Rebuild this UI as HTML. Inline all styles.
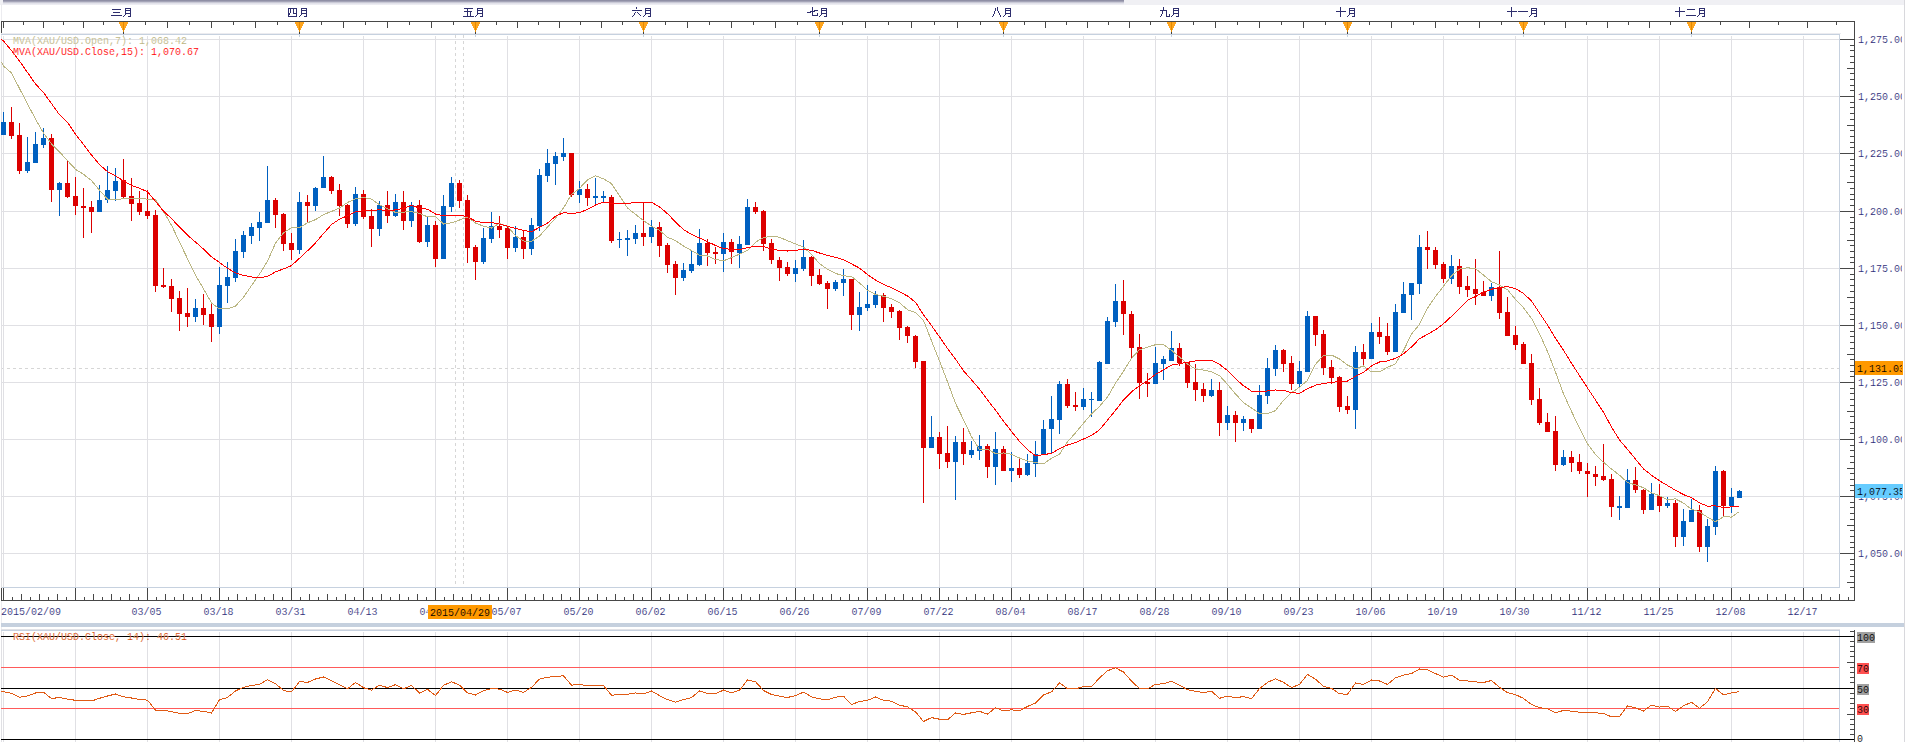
<!DOCTYPE html>
<html><head><meta charset="utf-8"><title>XAU/USD</title>
<style>
html,body{margin:0;padding:0;background:#fff;overflow:hidden}
#c{position:relative;width:1905px;height:742px;overflow:hidden}
svg{display:block}
.m{font-family:"Liberation Mono",monospace}
.s{font-family:"Liberation Serif",serif}
</style></head><body><div id="c">
<svg width="1905" height="742" viewBox="0 0 1905 742" shape-rendering="crispEdges">
<defs><linearGradient id="sh" x1="0" y1="0" x2="0" y2="1"><stop offset="0" stop-color="#8f8fa5"/><stop offset="0.2" stop-color="#8f8fa5"/><stop offset="0.45" stop-color="#c4c4d2"/><stop offset="0.7" stop-color="#e2e2ea"/><stop offset="1" stop-color="#f2f2f6"/></linearGradient></defs>
<rect x="0" y="0" width="1905" height="5" fill="#f0f0f4"/>
<rect x="3" y="0" width="1121" height="5" fill="url(#sh)"/>
<rect x="1" y="4" width="1" height="738" fill="#ececf0"/>
<rect x="1904" y="0" width="1" height="742" fill="#d8d8dc"/>
<rect x="1" y="21" width="1854" height="1" fill="#474747"/>
<rect x="1" y="21" width="1" height="14" fill="#474747"/>
<rect x="1854" y="21" width="1" height="580" fill="#474747"/>
<rect x="3" y="22" width="1" height="6" fill="#474747"/>
<rect x="23" y="22" width="1" height="3" fill="#474747"/>
<rect x="43" y="22" width="1" height="6" fill="#474747"/>
<rect x="63" y="22" width="1" height="3" fill="#474747"/>
<rect x="83" y="22" width="1" height="6" fill="#474747"/>
<rect x="103" y="22" width="1" height="3" fill="#474747"/>
<rect x="145" y="22" width="1" height="3" fill="#474747"/>
<rect x="167" y="22" width="1" height="6" fill="#474747"/>
<rect x="189" y="22" width="1" height="3" fill="#474747"/>
<rect x="211" y="22" width="1" height="6" fill="#474747"/>
<rect x="233" y="22" width="1" height="3" fill="#474747"/>
<rect x="255" y="22" width="1" height="6" fill="#474747"/>
<rect x="277" y="22" width="1" height="3" fill="#474747"/>
<rect x="321" y="22" width="1" height="3" fill="#474747"/>
<rect x="343" y="22" width="1" height="6" fill="#474747"/>
<rect x="365" y="22" width="1" height="3" fill="#474747"/>
<rect x="387" y="22" width="1" height="6" fill="#474747"/>
<rect x="409" y="22" width="1" height="3" fill="#474747"/>
<rect x="431" y="22" width="1" height="6" fill="#474747"/>
<rect x="453" y="22" width="1" height="3" fill="#474747"/>
<rect x="496" y="22" width="1" height="3" fill="#474747"/>
<rect x="517" y="22" width="1" height="6" fill="#474747"/>
<rect x="538" y="22" width="1" height="3" fill="#474747"/>
<rect x="559" y="22" width="1" height="6" fill="#474747"/>
<rect x="580" y="22" width="1" height="3" fill="#474747"/>
<rect x="601" y="22" width="1" height="6" fill="#474747"/>
<rect x="622" y="22" width="1" height="3" fill="#474747"/>
<rect x="665" y="22" width="1" height="3" fill="#474747"/>
<rect x="687" y="22" width="1" height="6" fill="#474747"/>
<rect x="709" y="22" width="1" height="3" fill="#474747"/>
<rect x="731" y="22" width="1" height="6" fill="#474747"/>
<rect x="753" y="22" width="1" height="3" fill="#474747"/>
<rect x="775" y="22" width="1" height="6" fill="#474747"/>
<rect x="797" y="22" width="1" height="3" fill="#474747"/>
<rect x="842" y="22" width="1" height="3" fill="#474747"/>
<rect x="865" y="22" width="1" height="6" fill="#474747"/>
<rect x="888" y="22" width="1" height="3" fill="#474747"/>
<rect x="911" y="22" width="1" height="6" fill="#474747"/>
<rect x="934" y="22" width="1" height="3" fill="#474747"/>
<rect x="957" y="22" width="1" height="6" fill="#474747"/>
<rect x="980" y="22" width="1" height="3" fill="#474747"/>
<rect x="1024" y="22" width="1" height="3" fill="#474747"/>
<rect x="1045" y="22" width="1" height="6" fill="#474747"/>
<rect x="1066" y="22" width="1" height="3" fill="#474747"/>
<rect x="1087" y="22" width="1" height="6" fill="#474747"/>
<rect x="1108" y="22" width="1" height="3" fill="#474747"/>
<rect x="1129" y="22" width="1" height="6" fill="#474747"/>
<rect x="1150" y="22" width="1" height="3" fill="#474747"/>
<rect x="1193" y="22" width="1" height="3" fill="#474747"/>
<rect x="1215" y="22" width="1" height="6" fill="#474747"/>
<rect x="1237" y="22" width="1" height="3" fill="#474747"/>
<rect x="1259" y="22" width="1" height="6" fill="#474747"/>
<rect x="1281" y="22" width="1" height="3" fill="#474747"/>
<rect x="1303" y="22" width="1" height="6" fill="#474747"/>
<rect x="1325" y="22" width="1" height="3" fill="#474747"/>
<rect x="1369" y="22" width="1" height="3" fill="#474747"/>
<rect x="1391" y="22" width="1" height="6" fill="#474747"/>
<rect x="1413" y="22" width="1" height="3" fill="#474747"/>
<rect x="1435" y="22" width="1" height="6" fill="#474747"/>
<rect x="1457" y="22" width="1" height="3" fill="#474747"/>
<rect x="1479" y="22" width="1" height="6" fill="#474747"/>
<rect x="1501" y="22" width="1" height="3" fill="#474747"/>
<rect x="1544" y="22" width="1" height="3" fill="#474747"/>
<rect x="1565" y="22" width="1" height="6" fill="#474747"/>
<rect x="1586" y="22" width="1" height="3" fill="#474747"/>
<rect x="1607" y="22" width="1" height="6" fill="#474747"/>
<rect x="1628" y="22" width="1" height="3" fill="#474747"/>
<rect x="1649" y="22" width="1" height="6" fill="#474747"/>
<rect x="1670" y="22" width="1" height="3" fill="#474747"/>
<rect x="1720" y="22" width="1" height="3" fill="#474747"/>
<rect x="1749" y="22" width="1" height="6" fill="#474747"/>
<rect x="1778" y="22" width="1" height="3" fill="#474747"/>
<rect x="1807" y="22" width="1" height="6" fill="#474747"/>
<rect x="1836" y="22" width="1" height="3" fill="#474747"/>
<rect x="119" y="22" width="9" height="1" fill="#ffa41c"/>
<rect x="119" y="23" width="9" height="1" fill="#ffa41c"/>
<rect x="120" y="24" width="7" height="1" fill="#ffa41c"/>
<rect x="120" y="25" width="7" height="1" fill="#ffa41c"/>
<rect x="121" y="26" width="5" height="1" fill="#ffa41c"/>
<rect x="121" y="27" width="5" height="1" fill="#ffa41c"/>
<rect x="122" y="28" width="3" height="1" fill="#ffa41c"/>
<rect x="122" y="29" width="3" height="1" fill="#ffa41c"/>
<rect x="123" y="30" width="1" height="1" fill="#ffa41c"/>
<rect x="123" y="31" width="1" height="1" fill="#ffa41c"/>
<rect x="123" y="22" width="1" height="10" fill="#e48a00"/>
<rect x="123" y="32" width="1" height="2" fill="#404040"/>
<rect x="295" y="22" width="9" height="1" fill="#ffa41c"/>
<rect x="295" y="23" width="9" height="1" fill="#ffa41c"/>
<rect x="296" y="24" width="7" height="1" fill="#ffa41c"/>
<rect x="296" y="25" width="7" height="1" fill="#ffa41c"/>
<rect x="297" y="26" width="5" height="1" fill="#ffa41c"/>
<rect x="297" y="27" width="5" height="1" fill="#ffa41c"/>
<rect x="298" y="28" width="3" height="1" fill="#ffa41c"/>
<rect x="298" y="29" width="3" height="1" fill="#ffa41c"/>
<rect x="299" y="30" width="1" height="1" fill="#ffa41c"/>
<rect x="299" y="31" width="1" height="1" fill="#ffa41c"/>
<rect x="299" y="22" width="1" height="10" fill="#e48a00"/>
<rect x="299" y="32" width="1" height="2" fill="#404040"/>
<rect x="471" y="22" width="9" height="1" fill="#ffa41c"/>
<rect x="471" y="23" width="9" height="1" fill="#ffa41c"/>
<rect x="472" y="24" width="7" height="1" fill="#ffa41c"/>
<rect x="472" y="25" width="7" height="1" fill="#ffa41c"/>
<rect x="473" y="26" width="5" height="1" fill="#ffa41c"/>
<rect x="473" y="27" width="5" height="1" fill="#ffa41c"/>
<rect x="474" y="28" width="3" height="1" fill="#ffa41c"/>
<rect x="474" y="29" width="3" height="1" fill="#ffa41c"/>
<rect x="475" y="30" width="1" height="1" fill="#ffa41c"/>
<rect x="475" y="31" width="1" height="1" fill="#ffa41c"/>
<rect x="475" y="22" width="1" height="10" fill="#e48a00"/>
<rect x="475" y="32" width="1" height="2" fill="#404040"/>
<rect x="639" y="22" width="9" height="1" fill="#ffa41c"/>
<rect x="639" y="23" width="9" height="1" fill="#ffa41c"/>
<rect x="640" y="24" width="7" height="1" fill="#ffa41c"/>
<rect x="640" y="25" width="7" height="1" fill="#ffa41c"/>
<rect x="641" y="26" width="5" height="1" fill="#ffa41c"/>
<rect x="641" y="27" width="5" height="1" fill="#ffa41c"/>
<rect x="642" y="28" width="3" height="1" fill="#ffa41c"/>
<rect x="642" y="29" width="3" height="1" fill="#ffa41c"/>
<rect x="643" y="30" width="1" height="1" fill="#ffa41c"/>
<rect x="643" y="31" width="1" height="1" fill="#ffa41c"/>
<rect x="643" y="22" width="1" height="10" fill="#e48a00"/>
<rect x="643" y="32" width="1" height="2" fill="#404040"/>
<rect x="815" y="22" width="9" height="1" fill="#ffa41c"/>
<rect x="815" y="23" width="9" height="1" fill="#ffa41c"/>
<rect x="816" y="24" width="7" height="1" fill="#ffa41c"/>
<rect x="816" y="25" width="7" height="1" fill="#ffa41c"/>
<rect x="817" y="26" width="5" height="1" fill="#ffa41c"/>
<rect x="817" y="27" width="5" height="1" fill="#ffa41c"/>
<rect x="818" y="28" width="3" height="1" fill="#ffa41c"/>
<rect x="818" y="29" width="3" height="1" fill="#ffa41c"/>
<rect x="819" y="30" width="1" height="1" fill="#ffa41c"/>
<rect x="819" y="31" width="1" height="1" fill="#ffa41c"/>
<rect x="819" y="22" width="1" height="10" fill="#e48a00"/>
<rect x="819" y="32" width="1" height="2" fill="#404040"/>
<rect x="999" y="22" width="9" height="1" fill="#ffa41c"/>
<rect x="999" y="23" width="9" height="1" fill="#ffa41c"/>
<rect x="1000" y="24" width="7" height="1" fill="#ffa41c"/>
<rect x="1000" y="25" width="7" height="1" fill="#ffa41c"/>
<rect x="1001" y="26" width="5" height="1" fill="#ffa41c"/>
<rect x="1001" y="27" width="5" height="1" fill="#ffa41c"/>
<rect x="1002" y="28" width="3" height="1" fill="#ffa41c"/>
<rect x="1002" y="29" width="3" height="1" fill="#ffa41c"/>
<rect x="1003" y="30" width="1" height="1" fill="#ffa41c"/>
<rect x="1003" y="31" width="1" height="1" fill="#ffa41c"/>
<rect x="1003" y="22" width="1" height="10" fill="#e48a00"/>
<rect x="1003" y="32" width="1" height="2" fill="#404040"/>
<rect x="1167" y="22" width="9" height="1" fill="#ffa41c"/>
<rect x="1167" y="23" width="9" height="1" fill="#ffa41c"/>
<rect x="1168" y="24" width="7" height="1" fill="#ffa41c"/>
<rect x="1168" y="25" width="7" height="1" fill="#ffa41c"/>
<rect x="1169" y="26" width="5" height="1" fill="#ffa41c"/>
<rect x="1169" y="27" width="5" height="1" fill="#ffa41c"/>
<rect x="1170" y="28" width="3" height="1" fill="#ffa41c"/>
<rect x="1170" y="29" width="3" height="1" fill="#ffa41c"/>
<rect x="1171" y="30" width="1" height="1" fill="#ffa41c"/>
<rect x="1171" y="31" width="1" height="1" fill="#ffa41c"/>
<rect x="1171" y="22" width="1" height="10" fill="#e48a00"/>
<rect x="1171" y="32" width="1" height="2" fill="#404040"/>
<rect x="1343" y="22" width="9" height="1" fill="#ffa41c"/>
<rect x="1343" y="23" width="9" height="1" fill="#ffa41c"/>
<rect x="1344" y="24" width="7" height="1" fill="#ffa41c"/>
<rect x="1344" y="25" width="7" height="1" fill="#ffa41c"/>
<rect x="1345" y="26" width="5" height="1" fill="#ffa41c"/>
<rect x="1345" y="27" width="5" height="1" fill="#ffa41c"/>
<rect x="1346" y="28" width="3" height="1" fill="#ffa41c"/>
<rect x="1346" y="29" width="3" height="1" fill="#ffa41c"/>
<rect x="1347" y="30" width="1" height="1" fill="#ffa41c"/>
<rect x="1347" y="31" width="1" height="1" fill="#ffa41c"/>
<rect x="1347" y="22" width="1" height="10" fill="#e48a00"/>
<rect x="1347" y="32" width="1" height="2" fill="#404040"/>
<rect x="1519" y="22" width="9" height="1" fill="#ffa41c"/>
<rect x="1519" y="23" width="9" height="1" fill="#ffa41c"/>
<rect x="1520" y="24" width="7" height="1" fill="#ffa41c"/>
<rect x="1520" y="25" width="7" height="1" fill="#ffa41c"/>
<rect x="1521" y="26" width="5" height="1" fill="#ffa41c"/>
<rect x="1521" y="27" width="5" height="1" fill="#ffa41c"/>
<rect x="1522" y="28" width="3" height="1" fill="#ffa41c"/>
<rect x="1522" y="29" width="3" height="1" fill="#ffa41c"/>
<rect x="1523" y="30" width="1" height="1" fill="#ffa41c"/>
<rect x="1523" y="31" width="1" height="1" fill="#ffa41c"/>
<rect x="1523" y="22" width="1" height="10" fill="#e48a00"/>
<rect x="1523" y="32" width="1" height="2" fill="#404040"/>
<rect x="1687" y="22" width="9" height="1" fill="#ffa41c"/>
<rect x="1687" y="23" width="9" height="1" fill="#ffa41c"/>
<rect x="1688" y="24" width="7" height="1" fill="#ffa41c"/>
<rect x="1688" y="25" width="7" height="1" fill="#ffa41c"/>
<rect x="1689" y="26" width="5" height="1" fill="#ffa41c"/>
<rect x="1689" y="27" width="5" height="1" fill="#ffa41c"/>
<rect x="1690" y="28" width="3" height="1" fill="#ffa41c"/>
<rect x="1690" y="29" width="3" height="1" fill="#ffa41c"/>
<rect x="1691" y="30" width="1" height="1" fill="#ffa41c"/>
<rect x="1691" y="31" width="1" height="1" fill="#ffa41c"/>
<rect x="1691" y="22" width="1" height="10" fill="#e48a00"/>
<rect x="1691" y="32" width="1" height="2" fill="#404040"/>
<rect x="112" y="9" width="1" height="1" fill="#2e2e6e"/>
<rect x="113" y="9" width="1" height="1" fill="#2e2e6e"/>
<rect x="114" y="9" width="1" height="1" fill="#2e2e6e"/>
<rect x="115" y="9" width="1" height="1" fill="#2e2e6e"/>
<rect x="116" y="9" width="1" height="1" fill="#2e2e6e"/>
<rect x="117" y="9" width="1" height="1" fill="#2e2e6e"/>
<rect x="118" y="9" width="1" height="1" fill="#2e2e6e"/>
<rect x="119" y="9" width="1" height="1" fill="#2e2e6e"/>
<rect x="120" y="9" width="1" height="1" fill="#2e2e6e"/>
<rect x="113" y="12" width="1" height="1" fill="#2e2e6e"/>
<rect x="114" y="12" width="1" height="1" fill="#2e2e6e"/>
<rect x="115" y="12" width="1" height="1" fill="#2e2e6e"/>
<rect x="116" y="12" width="1" height="1" fill="#2e2e6e"/>
<rect x="117" y="12" width="1" height="1" fill="#2e2e6e"/>
<rect x="118" y="12" width="1" height="1" fill="#2e2e6e"/>
<rect x="119" y="12" width="1" height="1" fill="#2e2e6e"/>
<rect x="111" y="15" width="1" height="1" fill="#2e2e6e"/>
<rect x="112" y="15" width="1" height="1" fill="#2e2e6e"/>
<rect x="113" y="15" width="1" height="1" fill="#2e2e6e"/>
<rect x="114" y="15" width="1" height="1" fill="#2e2e6e"/>
<rect x="115" y="15" width="1" height="1" fill="#2e2e6e"/>
<rect x="116" y="15" width="1" height="1" fill="#2e2e6e"/>
<rect x="117" y="15" width="1" height="1" fill="#2e2e6e"/>
<rect x="118" y="15" width="1" height="1" fill="#2e2e6e"/>
<rect x="119" y="15" width="1" height="1" fill="#2e2e6e"/>
<rect x="120" y="15" width="1" height="1" fill="#2e2e6e"/>
<rect x="121" y="15" width="1" height="1" fill="#2e2e6e"/>
<rect x="123" y="16" width="1" height="1" fill="#2e2e6e"/>
<rect x="124" y="15" width="1" height="1" fill="#2e2e6e"/>
<rect x="125" y="8" width="1" height="1" fill="#2e2e6e"/>
<rect x="125" y="9" width="1" height="1" fill="#2e2e6e"/>
<rect x="125" y="10" width="1" height="1" fill="#2e2e6e"/>
<rect x="125" y="11" width="1" height="1" fill="#2e2e6e"/>
<rect x="125" y="12" width="1" height="1" fill="#2e2e6e"/>
<rect x="125" y="13" width="1" height="1" fill="#2e2e6e"/>
<rect x="125" y="14" width="1" height="1" fill="#2e2e6e"/>
<rect x="125" y="8" width="1" height="1" fill="#2e2e6e"/>
<rect x="126" y="8" width="1" height="1" fill="#2e2e6e"/>
<rect x="127" y="8" width="1" height="1" fill="#2e2e6e"/>
<rect x="128" y="8" width="1" height="1" fill="#2e2e6e"/>
<rect x="129" y="8" width="1" height="1" fill="#2e2e6e"/>
<rect x="130" y="8" width="1" height="1" fill="#2e2e6e"/>
<rect x="125" y="10" width="1" height="1" fill="#2e2e6e"/>
<rect x="126" y="10" width="1" height="1" fill="#2e2e6e"/>
<rect x="127" y="10" width="1" height="1" fill="#2e2e6e"/>
<rect x="128" y="10" width="1" height="1" fill="#2e2e6e"/>
<rect x="129" y="10" width="1" height="1" fill="#2e2e6e"/>
<rect x="125" y="13" width="1" height="1" fill="#2e2e6e"/>
<rect x="126" y="13" width="1" height="1" fill="#2e2e6e"/>
<rect x="127" y="13" width="1" height="1" fill="#2e2e6e"/>
<rect x="128" y="13" width="1" height="1" fill="#2e2e6e"/>
<rect x="129" y="13" width="1" height="1" fill="#2e2e6e"/>
<rect x="130" y="8" width="1" height="1" fill="#2e2e6e"/>
<rect x="130" y="9" width="1" height="1" fill="#2e2e6e"/>
<rect x="130" y="10" width="1" height="1" fill="#2e2e6e"/>
<rect x="130" y="11" width="1" height="1" fill="#2e2e6e"/>
<rect x="130" y="12" width="1" height="1" fill="#2e2e6e"/>
<rect x="130" y="13" width="1" height="1" fill="#2e2e6e"/>
<rect x="130" y="14" width="1" height="1" fill="#2e2e6e"/>
<rect x="130" y="15" width="1" height="1" fill="#2e2e6e"/>
<rect x="130" y="16" width="1" height="1" fill="#2e2e6e"/>
<rect x="128" y="16" width="1" height="1" fill="#2e2e6e"/>
<rect x="129" y="16" width="1" height="1" fill="#2e2e6e"/>
<rect x="288" y="8" width="1" height="1" fill="#2e2e6e"/>
<rect x="289" y="8" width="1" height="1" fill="#2e2e6e"/>
<rect x="290" y="8" width="1" height="1" fill="#2e2e6e"/>
<rect x="291" y="8" width="1" height="1" fill="#2e2e6e"/>
<rect x="292" y="8" width="1" height="1" fill="#2e2e6e"/>
<rect x="293" y="8" width="1" height="1" fill="#2e2e6e"/>
<rect x="294" y="8" width="1" height="1" fill="#2e2e6e"/>
<rect x="295" y="8" width="1" height="1" fill="#2e2e6e"/>
<rect x="296" y="8" width="1" height="1" fill="#2e2e6e"/>
<rect x="288" y="16" width="1" height="1" fill="#2e2e6e"/>
<rect x="289" y="16" width="1" height="1" fill="#2e2e6e"/>
<rect x="290" y="16" width="1" height="1" fill="#2e2e6e"/>
<rect x="291" y="16" width="1" height="1" fill="#2e2e6e"/>
<rect x="292" y="16" width="1" height="1" fill="#2e2e6e"/>
<rect x="293" y="16" width="1" height="1" fill="#2e2e6e"/>
<rect x="294" y="16" width="1" height="1" fill="#2e2e6e"/>
<rect x="295" y="16" width="1" height="1" fill="#2e2e6e"/>
<rect x="296" y="16" width="1" height="1" fill="#2e2e6e"/>
<rect x="288" y="8" width="1" height="1" fill="#2e2e6e"/>
<rect x="288" y="9" width="1" height="1" fill="#2e2e6e"/>
<rect x="288" y="10" width="1" height="1" fill="#2e2e6e"/>
<rect x="288" y="11" width="1" height="1" fill="#2e2e6e"/>
<rect x="288" y="12" width="1" height="1" fill="#2e2e6e"/>
<rect x="288" y="13" width="1" height="1" fill="#2e2e6e"/>
<rect x="288" y="14" width="1" height="1" fill="#2e2e6e"/>
<rect x="288" y="15" width="1" height="1" fill="#2e2e6e"/>
<rect x="288" y="16" width="1" height="1" fill="#2e2e6e"/>
<rect x="296" y="8" width="1" height="1" fill="#2e2e6e"/>
<rect x="296" y="9" width="1" height="1" fill="#2e2e6e"/>
<rect x="296" y="10" width="1" height="1" fill="#2e2e6e"/>
<rect x="296" y="11" width="1" height="1" fill="#2e2e6e"/>
<rect x="296" y="12" width="1" height="1" fill="#2e2e6e"/>
<rect x="296" y="13" width="1" height="1" fill="#2e2e6e"/>
<rect x="296" y="14" width="1" height="1" fill="#2e2e6e"/>
<rect x="296" y="15" width="1" height="1" fill="#2e2e6e"/>
<rect x="296" y="16" width="1" height="1" fill="#2e2e6e"/>
<rect x="290" y="9" width="1" height="1" fill="#2e2e6e"/>
<rect x="290" y="10" width="1" height="1" fill="#2e2e6e"/>
<rect x="290" y="11" width="1" height="1" fill="#2e2e6e"/>
<rect x="290" y="12" width="1" height="1" fill="#2e2e6e"/>
<rect x="289" y="13" width="1" height="1" fill="#2e2e6e"/>
<rect x="289" y="14" width="1" height="1" fill="#2e2e6e"/>
<rect x="293" y="9" width="1" height="1" fill="#2e2e6e"/>
<rect x="293" y="10" width="1" height="1" fill="#2e2e6e"/>
<rect x="293" y="11" width="1" height="1" fill="#2e2e6e"/>
<rect x="293" y="12" width="1" height="1" fill="#2e2e6e"/>
<rect x="293" y="13" width="1" height="1" fill="#2e2e6e"/>
<rect x="294" y="13" width="1" height="1" fill="#2e2e6e"/>
<rect x="295" y="13" width="1" height="1" fill="#2e2e6e"/>
<rect x="299" y="16" width="1" height="1" fill="#2e2e6e"/>
<rect x="300" y="15" width="1" height="1" fill="#2e2e6e"/>
<rect x="301" y="8" width="1" height="1" fill="#2e2e6e"/>
<rect x="301" y="9" width="1" height="1" fill="#2e2e6e"/>
<rect x="301" y="10" width="1" height="1" fill="#2e2e6e"/>
<rect x="301" y="11" width="1" height="1" fill="#2e2e6e"/>
<rect x="301" y="12" width="1" height="1" fill="#2e2e6e"/>
<rect x="301" y="13" width="1" height="1" fill="#2e2e6e"/>
<rect x="301" y="14" width="1" height="1" fill="#2e2e6e"/>
<rect x="301" y="8" width="1" height="1" fill="#2e2e6e"/>
<rect x="302" y="8" width="1" height="1" fill="#2e2e6e"/>
<rect x="303" y="8" width="1" height="1" fill="#2e2e6e"/>
<rect x="304" y="8" width="1" height="1" fill="#2e2e6e"/>
<rect x="305" y="8" width="1" height="1" fill="#2e2e6e"/>
<rect x="306" y="8" width="1" height="1" fill="#2e2e6e"/>
<rect x="301" y="10" width="1" height="1" fill="#2e2e6e"/>
<rect x="302" y="10" width="1" height="1" fill="#2e2e6e"/>
<rect x="303" y="10" width="1" height="1" fill="#2e2e6e"/>
<rect x="304" y="10" width="1" height="1" fill="#2e2e6e"/>
<rect x="305" y="10" width="1" height="1" fill="#2e2e6e"/>
<rect x="301" y="13" width="1" height="1" fill="#2e2e6e"/>
<rect x="302" y="13" width="1" height="1" fill="#2e2e6e"/>
<rect x="303" y="13" width="1" height="1" fill="#2e2e6e"/>
<rect x="304" y="13" width="1" height="1" fill="#2e2e6e"/>
<rect x="305" y="13" width="1" height="1" fill="#2e2e6e"/>
<rect x="306" y="8" width="1" height="1" fill="#2e2e6e"/>
<rect x="306" y="9" width="1" height="1" fill="#2e2e6e"/>
<rect x="306" y="10" width="1" height="1" fill="#2e2e6e"/>
<rect x="306" y="11" width="1" height="1" fill="#2e2e6e"/>
<rect x="306" y="12" width="1" height="1" fill="#2e2e6e"/>
<rect x="306" y="13" width="1" height="1" fill="#2e2e6e"/>
<rect x="306" y="14" width="1" height="1" fill="#2e2e6e"/>
<rect x="306" y="15" width="1" height="1" fill="#2e2e6e"/>
<rect x="306" y="16" width="1" height="1" fill="#2e2e6e"/>
<rect x="304" y="16" width="1" height="1" fill="#2e2e6e"/>
<rect x="305" y="16" width="1" height="1" fill="#2e2e6e"/>
<rect x="464" y="8" width="1" height="1" fill="#2e2e6e"/>
<rect x="465" y="8" width="1" height="1" fill="#2e2e6e"/>
<rect x="466" y="8" width="1" height="1" fill="#2e2e6e"/>
<rect x="467" y="8" width="1" height="1" fill="#2e2e6e"/>
<rect x="468" y="8" width="1" height="1" fill="#2e2e6e"/>
<rect x="469" y="8" width="1" height="1" fill="#2e2e6e"/>
<rect x="470" y="8" width="1" height="1" fill="#2e2e6e"/>
<rect x="471" y="8" width="1" height="1" fill="#2e2e6e"/>
<rect x="472" y="8" width="1" height="1" fill="#2e2e6e"/>
<rect x="464" y="11" width="1" height="1" fill="#2e2e6e"/>
<rect x="465" y="11" width="1" height="1" fill="#2e2e6e"/>
<rect x="466" y="11" width="1" height="1" fill="#2e2e6e"/>
<rect x="467" y="11" width="1" height="1" fill="#2e2e6e"/>
<rect x="468" y="11" width="1" height="1" fill="#2e2e6e"/>
<rect x="469" y="11" width="1" height="1" fill="#2e2e6e"/>
<rect x="470" y="11" width="1" height="1" fill="#2e2e6e"/>
<rect x="471" y="11" width="1" height="1" fill="#2e2e6e"/>
<rect x="463" y="16" width="1" height="1" fill="#2e2e6e"/>
<rect x="464" y="16" width="1" height="1" fill="#2e2e6e"/>
<rect x="465" y="16" width="1" height="1" fill="#2e2e6e"/>
<rect x="466" y="16" width="1" height="1" fill="#2e2e6e"/>
<rect x="467" y="16" width="1" height="1" fill="#2e2e6e"/>
<rect x="468" y="16" width="1" height="1" fill="#2e2e6e"/>
<rect x="469" y="16" width="1" height="1" fill="#2e2e6e"/>
<rect x="470" y="16" width="1" height="1" fill="#2e2e6e"/>
<rect x="471" y="16" width="1" height="1" fill="#2e2e6e"/>
<rect x="472" y="16" width="1" height="1" fill="#2e2e6e"/>
<rect x="473" y="16" width="1" height="1" fill="#2e2e6e"/>
<rect x="467" y="9" width="1" height="1" fill="#2e2e6e"/>
<rect x="467" y="10" width="1" height="1" fill="#2e2e6e"/>
<rect x="467" y="11" width="1" height="1" fill="#2e2e6e"/>
<rect x="467" y="12" width="1" height="1" fill="#2e2e6e"/>
<rect x="467" y="13" width="1" height="1" fill="#2e2e6e"/>
<rect x="467" y="14" width="1" height="1" fill="#2e2e6e"/>
<rect x="467" y="15" width="1" height="1" fill="#2e2e6e"/>
<rect x="470" y="12" width="1" height="1" fill="#2e2e6e"/>
<rect x="470" y="13" width="1" height="1" fill="#2e2e6e"/>
<rect x="470" y="14" width="1" height="1" fill="#2e2e6e"/>
<rect x="470" y="15" width="1" height="1" fill="#2e2e6e"/>
<rect x="475" y="16" width="1" height="1" fill="#2e2e6e"/>
<rect x="476" y="15" width="1" height="1" fill="#2e2e6e"/>
<rect x="477" y="8" width="1" height="1" fill="#2e2e6e"/>
<rect x="477" y="9" width="1" height="1" fill="#2e2e6e"/>
<rect x="477" y="10" width="1" height="1" fill="#2e2e6e"/>
<rect x="477" y="11" width="1" height="1" fill="#2e2e6e"/>
<rect x="477" y="12" width="1" height="1" fill="#2e2e6e"/>
<rect x="477" y="13" width="1" height="1" fill="#2e2e6e"/>
<rect x="477" y="14" width="1" height="1" fill="#2e2e6e"/>
<rect x="477" y="8" width="1" height="1" fill="#2e2e6e"/>
<rect x="478" y="8" width="1" height="1" fill="#2e2e6e"/>
<rect x="479" y="8" width="1" height="1" fill="#2e2e6e"/>
<rect x="480" y="8" width="1" height="1" fill="#2e2e6e"/>
<rect x="481" y="8" width="1" height="1" fill="#2e2e6e"/>
<rect x="482" y="8" width="1" height="1" fill="#2e2e6e"/>
<rect x="477" y="10" width="1" height="1" fill="#2e2e6e"/>
<rect x="478" y="10" width="1" height="1" fill="#2e2e6e"/>
<rect x="479" y="10" width="1" height="1" fill="#2e2e6e"/>
<rect x="480" y="10" width="1" height="1" fill="#2e2e6e"/>
<rect x="481" y="10" width="1" height="1" fill="#2e2e6e"/>
<rect x="477" y="13" width="1" height="1" fill="#2e2e6e"/>
<rect x="478" y="13" width="1" height="1" fill="#2e2e6e"/>
<rect x="479" y="13" width="1" height="1" fill="#2e2e6e"/>
<rect x="480" y="13" width="1" height="1" fill="#2e2e6e"/>
<rect x="481" y="13" width="1" height="1" fill="#2e2e6e"/>
<rect x="482" y="8" width="1" height="1" fill="#2e2e6e"/>
<rect x="482" y="9" width="1" height="1" fill="#2e2e6e"/>
<rect x="482" y="10" width="1" height="1" fill="#2e2e6e"/>
<rect x="482" y="11" width="1" height="1" fill="#2e2e6e"/>
<rect x="482" y="12" width="1" height="1" fill="#2e2e6e"/>
<rect x="482" y="13" width="1" height="1" fill="#2e2e6e"/>
<rect x="482" y="14" width="1" height="1" fill="#2e2e6e"/>
<rect x="482" y="15" width="1" height="1" fill="#2e2e6e"/>
<rect x="482" y="16" width="1" height="1" fill="#2e2e6e"/>
<rect x="480" y="16" width="1" height="1" fill="#2e2e6e"/>
<rect x="481" y="16" width="1" height="1" fill="#2e2e6e"/>
<rect x="636" y="7" width="1" height="1" fill="#2e2e6e"/>
<rect x="636" y="8" width="1" height="1" fill="#2e2e6e"/>
<rect x="632" y="10" width="1" height="1" fill="#2e2e6e"/>
<rect x="633" y="10" width="1" height="1" fill="#2e2e6e"/>
<rect x="634" y="10" width="1" height="1" fill="#2e2e6e"/>
<rect x="635" y="10" width="1" height="1" fill="#2e2e6e"/>
<rect x="636" y="10" width="1" height="1" fill="#2e2e6e"/>
<rect x="637" y="10" width="1" height="1" fill="#2e2e6e"/>
<rect x="638" y="10" width="1" height="1" fill="#2e2e6e"/>
<rect x="639" y="10" width="1" height="1" fill="#2e2e6e"/>
<rect x="640" y="10" width="1" height="1" fill="#2e2e6e"/>
<rect x="641" y="10" width="1" height="1" fill="#2e2e6e"/>
<rect x="635" y="12" width="1" height="1" fill="#2e2e6e"/>
<rect x="634" y="13" width="1" height="1" fill="#2e2e6e"/>
<rect x="634" y="14" width="1" height="1" fill="#2e2e6e"/>
<rect x="633" y="15" width="1" height="1" fill="#2e2e6e"/>
<rect x="632" y="16" width="1" height="1" fill="#2e2e6e"/>
<rect x="637" y="12" width="1" height="1" fill="#2e2e6e"/>
<rect x="638" y="13" width="1" height="1" fill="#2e2e6e"/>
<rect x="639" y="14" width="1" height="1" fill="#2e2e6e"/>
<rect x="640" y="15" width="1" height="1" fill="#2e2e6e"/>
<rect x="643" y="16" width="1" height="1" fill="#2e2e6e"/>
<rect x="644" y="15" width="1" height="1" fill="#2e2e6e"/>
<rect x="645" y="8" width="1" height="1" fill="#2e2e6e"/>
<rect x="645" y="9" width="1" height="1" fill="#2e2e6e"/>
<rect x="645" y="10" width="1" height="1" fill="#2e2e6e"/>
<rect x="645" y="11" width="1" height="1" fill="#2e2e6e"/>
<rect x="645" y="12" width="1" height="1" fill="#2e2e6e"/>
<rect x="645" y="13" width="1" height="1" fill="#2e2e6e"/>
<rect x="645" y="14" width="1" height="1" fill="#2e2e6e"/>
<rect x="645" y="8" width="1" height="1" fill="#2e2e6e"/>
<rect x="646" y="8" width="1" height="1" fill="#2e2e6e"/>
<rect x="647" y="8" width="1" height="1" fill="#2e2e6e"/>
<rect x="648" y="8" width="1" height="1" fill="#2e2e6e"/>
<rect x="649" y="8" width="1" height="1" fill="#2e2e6e"/>
<rect x="650" y="8" width="1" height="1" fill="#2e2e6e"/>
<rect x="645" y="10" width="1" height="1" fill="#2e2e6e"/>
<rect x="646" y="10" width="1" height="1" fill="#2e2e6e"/>
<rect x="647" y="10" width="1" height="1" fill="#2e2e6e"/>
<rect x="648" y="10" width="1" height="1" fill="#2e2e6e"/>
<rect x="649" y="10" width="1" height="1" fill="#2e2e6e"/>
<rect x="645" y="13" width="1" height="1" fill="#2e2e6e"/>
<rect x="646" y="13" width="1" height="1" fill="#2e2e6e"/>
<rect x="647" y="13" width="1" height="1" fill="#2e2e6e"/>
<rect x="648" y="13" width="1" height="1" fill="#2e2e6e"/>
<rect x="649" y="13" width="1" height="1" fill="#2e2e6e"/>
<rect x="650" y="8" width="1" height="1" fill="#2e2e6e"/>
<rect x="650" y="9" width="1" height="1" fill="#2e2e6e"/>
<rect x="650" y="10" width="1" height="1" fill="#2e2e6e"/>
<rect x="650" y="11" width="1" height="1" fill="#2e2e6e"/>
<rect x="650" y="12" width="1" height="1" fill="#2e2e6e"/>
<rect x="650" y="13" width="1" height="1" fill="#2e2e6e"/>
<rect x="650" y="14" width="1" height="1" fill="#2e2e6e"/>
<rect x="650" y="15" width="1" height="1" fill="#2e2e6e"/>
<rect x="650" y="16" width="1" height="1" fill="#2e2e6e"/>
<rect x="648" y="16" width="1" height="1" fill="#2e2e6e"/>
<rect x="649" y="16" width="1" height="1" fill="#2e2e6e"/>
<rect x="807" y="12" width="1" height="1" fill="#2e2e6e"/>
<rect x="808" y="12" width="1" height="1" fill="#2e2e6e"/>
<rect x="809" y="12" width="1" height="1" fill="#2e2e6e"/>
<rect x="810" y="12" width="1" height="1" fill="#2e2e6e"/>
<rect x="810" y="11" width="1" height="1" fill="#2e2e6e"/>
<rect x="811" y="11" width="1" height="1" fill="#2e2e6e"/>
<rect x="812" y="11" width="1" height="1" fill="#2e2e6e"/>
<rect x="813" y="11" width="1" height="1" fill="#2e2e6e"/>
<rect x="814" y="11" width="1" height="1" fill="#2e2e6e"/>
<rect x="814" y="10" width="1" height="1" fill="#2e2e6e"/>
<rect x="815" y="10" width="1" height="1" fill="#2e2e6e"/>
<rect x="816" y="10" width="1" height="1" fill="#2e2e6e"/>
<rect x="817" y="10" width="1" height="1" fill="#2e2e6e"/>
<rect x="812" y="7" width="1" height="1" fill="#2e2e6e"/>
<rect x="812" y="8" width="1" height="1" fill="#2e2e6e"/>
<rect x="812" y="9" width="1" height="1" fill="#2e2e6e"/>
<rect x="812" y="10" width="1" height="1" fill="#2e2e6e"/>
<rect x="812" y="11" width="1" height="1" fill="#2e2e6e"/>
<rect x="812" y="12" width="1" height="1" fill="#2e2e6e"/>
<rect x="812" y="13" width="1" height="1" fill="#2e2e6e"/>
<rect x="812" y="14" width="1" height="1" fill="#2e2e6e"/>
<rect x="812" y="15" width="1" height="1" fill="#2e2e6e"/>
<rect x="812" y="15" width="1" height="1" fill="#2e2e6e"/>
<rect x="813" y="15" width="1" height="1" fill="#2e2e6e"/>
<rect x="814" y="15" width="1" height="1" fill="#2e2e6e"/>
<rect x="815" y="15" width="1" height="1" fill="#2e2e6e"/>
<rect x="816" y="15" width="1" height="1" fill="#2e2e6e"/>
<rect x="817" y="15" width="1" height="1" fill="#2e2e6e"/>
<rect x="817" y="13" width="1" height="1" fill="#2e2e6e"/>
<rect x="817" y="14" width="1" height="1" fill="#2e2e6e"/>
<rect x="819" y="16" width="1" height="1" fill="#2e2e6e"/>
<rect x="820" y="15" width="1" height="1" fill="#2e2e6e"/>
<rect x="821" y="8" width="1" height="1" fill="#2e2e6e"/>
<rect x="821" y="9" width="1" height="1" fill="#2e2e6e"/>
<rect x="821" y="10" width="1" height="1" fill="#2e2e6e"/>
<rect x="821" y="11" width="1" height="1" fill="#2e2e6e"/>
<rect x="821" y="12" width="1" height="1" fill="#2e2e6e"/>
<rect x="821" y="13" width="1" height="1" fill="#2e2e6e"/>
<rect x="821" y="14" width="1" height="1" fill="#2e2e6e"/>
<rect x="821" y="8" width="1" height="1" fill="#2e2e6e"/>
<rect x="822" y="8" width="1" height="1" fill="#2e2e6e"/>
<rect x="823" y="8" width="1" height="1" fill="#2e2e6e"/>
<rect x="824" y="8" width="1" height="1" fill="#2e2e6e"/>
<rect x="825" y="8" width="1" height="1" fill="#2e2e6e"/>
<rect x="826" y="8" width="1" height="1" fill="#2e2e6e"/>
<rect x="821" y="10" width="1" height="1" fill="#2e2e6e"/>
<rect x="822" y="10" width="1" height="1" fill="#2e2e6e"/>
<rect x="823" y="10" width="1" height="1" fill="#2e2e6e"/>
<rect x="824" y="10" width="1" height="1" fill="#2e2e6e"/>
<rect x="825" y="10" width="1" height="1" fill="#2e2e6e"/>
<rect x="821" y="13" width="1" height="1" fill="#2e2e6e"/>
<rect x="822" y="13" width="1" height="1" fill="#2e2e6e"/>
<rect x="823" y="13" width="1" height="1" fill="#2e2e6e"/>
<rect x="824" y="13" width="1" height="1" fill="#2e2e6e"/>
<rect x="825" y="13" width="1" height="1" fill="#2e2e6e"/>
<rect x="826" y="8" width="1" height="1" fill="#2e2e6e"/>
<rect x="826" y="9" width="1" height="1" fill="#2e2e6e"/>
<rect x="826" y="10" width="1" height="1" fill="#2e2e6e"/>
<rect x="826" y="11" width="1" height="1" fill="#2e2e6e"/>
<rect x="826" y="12" width="1" height="1" fill="#2e2e6e"/>
<rect x="826" y="13" width="1" height="1" fill="#2e2e6e"/>
<rect x="826" y="14" width="1" height="1" fill="#2e2e6e"/>
<rect x="826" y="15" width="1" height="1" fill="#2e2e6e"/>
<rect x="826" y="16" width="1" height="1" fill="#2e2e6e"/>
<rect x="824" y="16" width="1" height="1" fill="#2e2e6e"/>
<rect x="825" y="16" width="1" height="1" fill="#2e2e6e"/>
<rect x="995" y="8" width="1" height="1" fill="#2e2e6e"/>
<rect x="995" y="9" width="1" height="1" fill="#2e2e6e"/>
<rect x="995" y="10" width="1" height="1" fill="#2e2e6e"/>
<rect x="994" y="11" width="1" height="1" fill="#2e2e6e"/>
<rect x="994" y="12" width="1" height="1" fill="#2e2e6e"/>
<rect x="994" y="13" width="1" height="1" fill="#2e2e6e"/>
<rect x="993" y="14" width="1" height="1" fill="#2e2e6e"/>
<rect x="993" y="15" width="1" height="1" fill="#2e2e6e"/>
<rect x="992" y="16" width="1" height="1" fill="#2e2e6e"/>
<rect x="997" y="7" width="1" height="1" fill="#2e2e6e"/>
<rect x="997" y="8" width="1" height="1" fill="#2e2e6e"/>
<rect x="997" y="9" width="1" height="1" fill="#2e2e6e"/>
<rect x="997" y="10" width="1" height="1" fill="#2e2e6e"/>
<rect x="998" y="11" width="1" height="1" fill="#2e2e6e"/>
<rect x="998" y="12" width="1" height="1" fill="#2e2e6e"/>
<rect x="999" y="13" width="1" height="1" fill="#2e2e6e"/>
<rect x="999" y="14" width="1" height="1" fill="#2e2e6e"/>
<rect x="1000" y="15" width="1" height="1" fill="#2e2e6e"/>
<rect x="1000" y="16" width="1" height="1" fill="#2e2e6e"/>
<rect x="1003" y="16" width="1" height="1" fill="#2e2e6e"/>
<rect x="1004" y="15" width="1" height="1" fill="#2e2e6e"/>
<rect x="1005" y="8" width="1" height="1" fill="#2e2e6e"/>
<rect x="1005" y="9" width="1" height="1" fill="#2e2e6e"/>
<rect x="1005" y="10" width="1" height="1" fill="#2e2e6e"/>
<rect x="1005" y="11" width="1" height="1" fill="#2e2e6e"/>
<rect x="1005" y="12" width="1" height="1" fill="#2e2e6e"/>
<rect x="1005" y="13" width="1" height="1" fill="#2e2e6e"/>
<rect x="1005" y="14" width="1" height="1" fill="#2e2e6e"/>
<rect x="1005" y="8" width="1" height="1" fill="#2e2e6e"/>
<rect x="1006" y="8" width="1" height="1" fill="#2e2e6e"/>
<rect x="1007" y="8" width="1" height="1" fill="#2e2e6e"/>
<rect x="1008" y="8" width="1" height="1" fill="#2e2e6e"/>
<rect x="1009" y="8" width="1" height="1" fill="#2e2e6e"/>
<rect x="1010" y="8" width="1" height="1" fill="#2e2e6e"/>
<rect x="1005" y="10" width="1" height="1" fill="#2e2e6e"/>
<rect x="1006" y="10" width="1" height="1" fill="#2e2e6e"/>
<rect x="1007" y="10" width="1" height="1" fill="#2e2e6e"/>
<rect x="1008" y="10" width="1" height="1" fill="#2e2e6e"/>
<rect x="1009" y="10" width="1" height="1" fill="#2e2e6e"/>
<rect x="1005" y="13" width="1" height="1" fill="#2e2e6e"/>
<rect x="1006" y="13" width="1" height="1" fill="#2e2e6e"/>
<rect x="1007" y="13" width="1" height="1" fill="#2e2e6e"/>
<rect x="1008" y="13" width="1" height="1" fill="#2e2e6e"/>
<rect x="1009" y="13" width="1" height="1" fill="#2e2e6e"/>
<rect x="1010" y="8" width="1" height="1" fill="#2e2e6e"/>
<rect x="1010" y="9" width="1" height="1" fill="#2e2e6e"/>
<rect x="1010" y="10" width="1" height="1" fill="#2e2e6e"/>
<rect x="1010" y="11" width="1" height="1" fill="#2e2e6e"/>
<rect x="1010" y="12" width="1" height="1" fill="#2e2e6e"/>
<rect x="1010" y="13" width="1" height="1" fill="#2e2e6e"/>
<rect x="1010" y="14" width="1" height="1" fill="#2e2e6e"/>
<rect x="1010" y="15" width="1" height="1" fill="#2e2e6e"/>
<rect x="1010" y="16" width="1" height="1" fill="#2e2e6e"/>
<rect x="1008" y="16" width="1" height="1" fill="#2e2e6e"/>
<rect x="1009" y="16" width="1" height="1" fill="#2e2e6e"/>
<rect x="1160" y="10" width="1" height="1" fill="#2e2e6e"/>
<rect x="1161" y="10" width="1" height="1" fill="#2e2e6e"/>
<rect x="1162" y="10" width="1" height="1" fill="#2e2e6e"/>
<rect x="1163" y="10" width="1" height="1" fill="#2e2e6e"/>
<rect x="1164" y="10" width="1" height="1" fill="#2e2e6e"/>
<rect x="1165" y="10" width="1" height="1" fill="#2e2e6e"/>
<rect x="1166" y="10" width="1" height="1" fill="#2e2e6e"/>
<rect x="1163" y="7" width="1" height="1" fill="#2e2e6e"/>
<rect x="1163" y="8" width="1" height="1" fill="#2e2e6e"/>
<rect x="1163" y="9" width="1" height="1" fill="#2e2e6e"/>
<rect x="1162" y="11" width="1" height="1" fill="#2e2e6e"/>
<rect x="1162" y="12" width="1" height="1" fill="#2e2e6e"/>
<rect x="1162" y="13" width="1" height="1" fill="#2e2e6e"/>
<rect x="1161" y="14" width="1" height="1" fill="#2e2e6e"/>
<rect x="1161" y="15" width="1" height="1" fill="#2e2e6e"/>
<rect x="1160" y="16" width="1" height="1" fill="#2e2e6e"/>
<rect x="1166" y="10" width="1" height="1" fill="#2e2e6e"/>
<rect x="1166" y="11" width="1" height="1" fill="#2e2e6e"/>
<rect x="1166" y="12" width="1" height="1" fill="#2e2e6e"/>
<rect x="1166" y="13" width="1" height="1" fill="#2e2e6e"/>
<rect x="1166" y="14" width="1" height="1" fill="#2e2e6e"/>
<rect x="1166" y="15" width="1" height="1" fill="#2e2e6e"/>
<rect x="1166" y="16" width="1" height="1" fill="#2e2e6e"/>
<rect x="1167" y="16" width="1" height="1" fill="#2e2e6e"/>
<rect x="1168" y="16" width="1" height="1" fill="#2e2e6e"/>
<rect x="1169" y="16" width="1" height="1" fill="#2e2e6e"/>
<rect x="1169" y="14" width="1" height="1" fill="#2e2e6e"/>
<rect x="1169" y="15" width="1" height="1" fill="#2e2e6e"/>
<rect x="1171" y="16" width="1" height="1" fill="#2e2e6e"/>
<rect x="1172" y="15" width="1" height="1" fill="#2e2e6e"/>
<rect x="1173" y="8" width="1" height="1" fill="#2e2e6e"/>
<rect x="1173" y="9" width="1" height="1" fill="#2e2e6e"/>
<rect x="1173" y="10" width="1" height="1" fill="#2e2e6e"/>
<rect x="1173" y="11" width="1" height="1" fill="#2e2e6e"/>
<rect x="1173" y="12" width="1" height="1" fill="#2e2e6e"/>
<rect x="1173" y="13" width="1" height="1" fill="#2e2e6e"/>
<rect x="1173" y="14" width="1" height="1" fill="#2e2e6e"/>
<rect x="1173" y="8" width="1" height="1" fill="#2e2e6e"/>
<rect x="1174" y="8" width="1" height="1" fill="#2e2e6e"/>
<rect x="1175" y="8" width="1" height="1" fill="#2e2e6e"/>
<rect x="1176" y="8" width="1" height="1" fill="#2e2e6e"/>
<rect x="1177" y="8" width="1" height="1" fill="#2e2e6e"/>
<rect x="1178" y="8" width="1" height="1" fill="#2e2e6e"/>
<rect x="1173" y="10" width="1" height="1" fill="#2e2e6e"/>
<rect x="1174" y="10" width="1" height="1" fill="#2e2e6e"/>
<rect x="1175" y="10" width="1" height="1" fill="#2e2e6e"/>
<rect x="1176" y="10" width="1" height="1" fill="#2e2e6e"/>
<rect x="1177" y="10" width="1" height="1" fill="#2e2e6e"/>
<rect x="1173" y="13" width="1" height="1" fill="#2e2e6e"/>
<rect x="1174" y="13" width="1" height="1" fill="#2e2e6e"/>
<rect x="1175" y="13" width="1" height="1" fill="#2e2e6e"/>
<rect x="1176" y="13" width="1" height="1" fill="#2e2e6e"/>
<rect x="1177" y="13" width="1" height="1" fill="#2e2e6e"/>
<rect x="1178" y="8" width="1" height="1" fill="#2e2e6e"/>
<rect x="1178" y="9" width="1" height="1" fill="#2e2e6e"/>
<rect x="1178" y="10" width="1" height="1" fill="#2e2e6e"/>
<rect x="1178" y="11" width="1" height="1" fill="#2e2e6e"/>
<rect x="1178" y="12" width="1" height="1" fill="#2e2e6e"/>
<rect x="1178" y="13" width="1" height="1" fill="#2e2e6e"/>
<rect x="1178" y="14" width="1" height="1" fill="#2e2e6e"/>
<rect x="1178" y="15" width="1" height="1" fill="#2e2e6e"/>
<rect x="1178" y="16" width="1" height="1" fill="#2e2e6e"/>
<rect x="1176" y="16" width="1" height="1" fill="#2e2e6e"/>
<rect x="1177" y="16" width="1" height="1" fill="#2e2e6e"/>
<rect x="1336" y="11" width="1" height="1" fill="#2e2e6e"/>
<rect x="1337" y="11" width="1" height="1" fill="#2e2e6e"/>
<rect x="1338" y="11" width="1" height="1" fill="#2e2e6e"/>
<rect x="1339" y="11" width="1" height="1" fill="#2e2e6e"/>
<rect x="1340" y="11" width="1" height="1" fill="#2e2e6e"/>
<rect x="1341" y="11" width="1" height="1" fill="#2e2e6e"/>
<rect x="1342" y="11" width="1" height="1" fill="#2e2e6e"/>
<rect x="1343" y="11" width="1" height="1" fill="#2e2e6e"/>
<rect x="1344" y="11" width="1" height="1" fill="#2e2e6e"/>
<rect x="1345" y="11" width="1" height="1" fill="#2e2e6e"/>
<rect x="1340" y="7" width="1" height="1" fill="#2e2e6e"/>
<rect x="1340" y="8" width="1" height="1" fill="#2e2e6e"/>
<rect x="1340" y="9" width="1" height="1" fill="#2e2e6e"/>
<rect x="1340" y="10" width="1" height="1" fill="#2e2e6e"/>
<rect x="1340" y="11" width="1" height="1" fill="#2e2e6e"/>
<rect x="1340" y="12" width="1" height="1" fill="#2e2e6e"/>
<rect x="1340" y="13" width="1" height="1" fill="#2e2e6e"/>
<rect x="1340" y="14" width="1" height="1" fill="#2e2e6e"/>
<rect x="1340" y="15" width="1" height="1" fill="#2e2e6e"/>
<rect x="1340" y="16" width="1" height="1" fill="#2e2e6e"/>
<rect x="1347" y="16" width="1" height="1" fill="#2e2e6e"/>
<rect x="1348" y="15" width="1" height="1" fill="#2e2e6e"/>
<rect x="1349" y="8" width="1" height="1" fill="#2e2e6e"/>
<rect x="1349" y="9" width="1" height="1" fill="#2e2e6e"/>
<rect x="1349" y="10" width="1" height="1" fill="#2e2e6e"/>
<rect x="1349" y="11" width="1" height="1" fill="#2e2e6e"/>
<rect x="1349" y="12" width="1" height="1" fill="#2e2e6e"/>
<rect x="1349" y="13" width="1" height="1" fill="#2e2e6e"/>
<rect x="1349" y="14" width="1" height="1" fill="#2e2e6e"/>
<rect x="1349" y="8" width="1" height="1" fill="#2e2e6e"/>
<rect x="1350" y="8" width="1" height="1" fill="#2e2e6e"/>
<rect x="1351" y="8" width="1" height="1" fill="#2e2e6e"/>
<rect x="1352" y="8" width="1" height="1" fill="#2e2e6e"/>
<rect x="1353" y="8" width="1" height="1" fill="#2e2e6e"/>
<rect x="1354" y="8" width="1" height="1" fill="#2e2e6e"/>
<rect x="1349" y="10" width="1" height="1" fill="#2e2e6e"/>
<rect x="1350" y="10" width="1" height="1" fill="#2e2e6e"/>
<rect x="1351" y="10" width="1" height="1" fill="#2e2e6e"/>
<rect x="1352" y="10" width="1" height="1" fill="#2e2e6e"/>
<rect x="1353" y="10" width="1" height="1" fill="#2e2e6e"/>
<rect x="1349" y="13" width="1" height="1" fill="#2e2e6e"/>
<rect x="1350" y="13" width="1" height="1" fill="#2e2e6e"/>
<rect x="1351" y="13" width="1" height="1" fill="#2e2e6e"/>
<rect x="1352" y="13" width="1" height="1" fill="#2e2e6e"/>
<rect x="1353" y="13" width="1" height="1" fill="#2e2e6e"/>
<rect x="1354" y="8" width="1" height="1" fill="#2e2e6e"/>
<rect x="1354" y="9" width="1" height="1" fill="#2e2e6e"/>
<rect x="1354" y="10" width="1" height="1" fill="#2e2e6e"/>
<rect x="1354" y="11" width="1" height="1" fill="#2e2e6e"/>
<rect x="1354" y="12" width="1" height="1" fill="#2e2e6e"/>
<rect x="1354" y="13" width="1" height="1" fill="#2e2e6e"/>
<rect x="1354" y="14" width="1" height="1" fill="#2e2e6e"/>
<rect x="1354" y="15" width="1" height="1" fill="#2e2e6e"/>
<rect x="1354" y="16" width="1" height="1" fill="#2e2e6e"/>
<rect x="1352" y="16" width="1" height="1" fill="#2e2e6e"/>
<rect x="1353" y="16" width="1" height="1" fill="#2e2e6e"/>
<rect x="1507" y="11" width="1" height="1" fill="#2e2e6e"/>
<rect x="1508" y="11" width="1" height="1" fill="#2e2e6e"/>
<rect x="1509" y="11" width="1" height="1" fill="#2e2e6e"/>
<rect x="1510" y="11" width="1" height="1" fill="#2e2e6e"/>
<rect x="1511" y="11" width="1" height="1" fill="#2e2e6e"/>
<rect x="1512" y="11" width="1" height="1" fill="#2e2e6e"/>
<rect x="1513" y="11" width="1" height="1" fill="#2e2e6e"/>
<rect x="1514" y="11" width="1" height="1" fill="#2e2e6e"/>
<rect x="1515" y="11" width="1" height="1" fill="#2e2e6e"/>
<rect x="1516" y="11" width="1" height="1" fill="#2e2e6e"/>
<rect x="1511" y="7" width="1" height="1" fill="#2e2e6e"/>
<rect x="1511" y="8" width="1" height="1" fill="#2e2e6e"/>
<rect x="1511" y="9" width="1" height="1" fill="#2e2e6e"/>
<rect x="1511" y="10" width="1" height="1" fill="#2e2e6e"/>
<rect x="1511" y="11" width="1" height="1" fill="#2e2e6e"/>
<rect x="1511" y="12" width="1" height="1" fill="#2e2e6e"/>
<rect x="1511" y="13" width="1" height="1" fill="#2e2e6e"/>
<rect x="1511" y="14" width="1" height="1" fill="#2e2e6e"/>
<rect x="1511" y="15" width="1" height="1" fill="#2e2e6e"/>
<rect x="1511" y="16" width="1" height="1" fill="#2e2e6e"/>
<rect x="1518" y="11" width="1" height="1" fill="#2e2e6e"/>
<rect x="1519" y="11" width="1" height="1" fill="#2e2e6e"/>
<rect x="1520" y="11" width="1" height="1" fill="#2e2e6e"/>
<rect x="1521" y="11" width="1" height="1" fill="#2e2e6e"/>
<rect x="1522" y="11" width="1" height="1" fill="#2e2e6e"/>
<rect x="1523" y="11" width="1" height="1" fill="#2e2e6e"/>
<rect x="1524" y="11" width="1" height="1" fill="#2e2e6e"/>
<rect x="1525" y="11" width="1" height="1" fill="#2e2e6e"/>
<rect x="1526" y="11" width="1" height="1" fill="#2e2e6e"/>
<rect x="1527" y="11" width="1" height="1" fill="#2e2e6e"/>
<rect x="1529" y="16" width="1" height="1" fill="#2e2e6e"/>
<rect x="1530" y="15" width="1" height="1" fill="#2e2e6e"/>
<rect x="1531" y="8" width="1" height="1" fill="#2e2e6e"/>
<rect x="1531" y="9" width="1" height="1" fill="#2e2e6e"/>
<rect x="1531" y="10" width="1" height="1" fill="#2e2e6e"/>
<rect x="1531" y="11" width="1" height="1" fill="#2e2e6e"/>
<rect x="1531" y="12" width="1" height="1" fill="#2e2e6e"/>
<rect x="1531" y="13" width="1" height="1" fill="#2e2e6e"/>
<rect x="1531" y="14" width="1" height="1" fill="#2e2e6e"/>
<rect x="1531" y="8" width="1" height="1" fill="#2e2e6e"/>
<rect x="1532" y="8" width="1" height="1" fill="#2e2e6e"/>
<rect x="1533" y="8" width="1" height="1" fill="#2e2e6e"/>
<rect x="1534" y="8" width="1" height="1" fill="#2e2e6e"/>
<rect x="1535" y="8" width="1" height="1" fill="#2e2e6e"/>
<rect x="1536" y="8" width="1" height="1" fill="#2e2e6e"/>
<rect x="1531" y="10" width="1" height="1" fill="#2e2e6e"/>
<rect x="1532" y="10" width="1" height="1" fill="#2e2e6e"/>
<rect x="1533" y="10" width="1" height="1" fill="#2e2e6e"/>
<rect x="1534" y="10" width="1" height="1" fill="#2e2e6e"/>
<rect x="1535" y="10" width="1" height="1" fill="#2e2e6e"/>
<rect x="1531" y="13" width="1" height="1" fill="#2e2e6e"/>
<rect x="1532" y="13" width="1" height="1" fill="#2e2e6e"/>
<rect x="1533" y="13" width="1" height="1" fill="#2e2e6e"/>
<rect x="1534" y="13" width="1" height="1" fill="#2e2e6e"/>
<rect x="1535" y="13" width="1" height="1" fill="#2e2e6e"/>
<rect x="1536" y="8" width="1" height="1" fill="#2e2e6e"/>
<rect x="1536" y="9" width="1" height="1" fill="#2e2e6e"/>
<rect x="1536" y="10" width="1" height="1" fill="#2e2e6e"/>
<rect x="1536" y="11" width="1" height="1" fill="#2e2e6e"/>
<rect x="1536" y="12" width="1" height="1" fill="#2e2e6e"/>
<rect x="1536" y="13" width="1" height="1" fill="#2e2e6e"/>
<rect x="1536" y="14" width="1" height="1" fill="#2e2e6e"/>
<rect x="1536" y="15" width="1" height="1" fill="#2e2e6e"/>
<rect x="1536" y="16" width="1" height="1" fill="#2e2e6e"/>
<rect x="1534" y="16" width="1" height="1" fill="#2e2e6e"/>
<rect x="1535" y="16" width="1" height="1" fill="#2e2e6e"/>
<rect x="1675" y="11" width="1" height="1" fill="#2e2e6e"/>
<rect x="1676" y="11" width="1" height="1" fill="#2e2e6e"/>
<rect x="1677" y="11" width="1" height="1" fill="#2e2e6e"/>
<rect x="1678" y="11" width="1" height="1" fill="#2e2e6e"/>
<rect x="1679" y="11" width="1" height="1" fill="#2e2e6e"/>
<rect x="1680" y="11" width="1" height="1" fill="#2e2e6e"/>
<rect x="1681" y="11" width="1" height="1" fill="#2e2e6e"/>
<rect x="1682" y="11" width="1" height="1" fill="#2e2e6e"/>
<rect x="1683" y="11" width="1" height="1" fill="#2e2e6e"/>
<rect x="1684" y="11" width="1" height="1" fill="#2e2e6e"/>
<rect x="1679" y="7" width="1" height="1" fill="#2e2e6e"/>
<rect x="1679" y="8" width="1" height="1" fill="#2e2e6e"/>
<rect x="1679" y="9" width="1" height="1" fill="#2e2e6e"/>
<rect x="1679" y="10" width="1" height="1" fill="#2e2e6e"/>
<rect x="1679" y="11" width="1" height="1" fill="#2e2e6e"/>
<rect x="1679" y="12" width="1" height="1" fill="#2e2e6e"/>
<rect x="1679" y="13" width="1" height="1" fill="#2e2e6e"/>
<rect x="1679" y="14" width="1" height="1" fill="#2e2e6e"/>
<rect x="1679" y="15" width="1" height="1" fill="#2e2e6e"/>
<rect x="1679" y="16" width="1" height="1" fill="#2e2e6e"/>
<rect x="1687" y="9" width="1" height="1" fill="#2e2e6e"/>
<rect x="1688" y="9" width="1" height="1" fill="#2e2e6e"/>
<rect x="1689" y="9" width="1" height="1" fill="#2e2e6e"/>
<rect x="1690" y="9" width="1" height="1" fill="#2e2e6e"/>
<rect x="1691" y="9" width="1" height="1" fill="#2e2e6e"/>
<rect x="1692" y="9" width="1" height="1" fill="#2e2e6e"/>
<rect x="1693" y="9" width="1" height="1" fill="#2e2e6e"/>
<rect x="1694" y="9" width="1" height="1" fill="#2e2e6e"/>
<rect x="1686" y="15" width="1" height="1" fill="#2e2e6e"/>
<rect x="1687" y="15" width="1" height="1" fill="#2e2e6e"/>
<rect x="1688" y="15" width="1" height="1" fill="#2e2e6e"/>
<rect x="1689" y="15" width="1" height="1" fill="#2e2e6e"/>
<rect x="1690" y="15" width="1" height="1" fill="#2e2e6e"/>
<rect x="1691" y="15" width="1" height="1" fill="#2e2e6e"/>
<rect x="1692" y="15" width="1" height="1" fill="#2e2e6e"/>
<rect x="1693" y="15" width="1" height="1" fill="#2e2e6e"/>
<rect x="1694" y="15" width="1" height="1" fill="#2e2e6e"/>
<rect x="1695" y="15" width="1" height="1" fill="#2e2e6e"/>
<rect x="1697" y="16" width="1" height="1" fill="#2e2e6e"/>
<rect x="1698" y="15" width="1" height="1" fill="#2e2e6e"/>
<rect x="1699" y="8" width="1" height="1" fill="#2e2e6e"/>
<rect x="1699" y="9" width="1" height="1" fill="#2e2e6e"/>
<rect x="1699" y="10" width="1" height="1" fill="#2e2e6e"/>
<rect x="1699" y="11" width="1" height="1" fill="#2e2e6e"/>
<rect x="1699" y="12" width="1" height="1" fill="#2e2e6e"/>
<rect x="1699" y="13" width="1" height="1" fill="#2e2e6e"/>
<rect x="1699" y="14" width="1" height="1" fill="#2e2e6e"/>
<rect x="1699" y="8" width="1" height="1" fill="#2e2e6e"/>
<rect x="1700" y="8" width="1" height="1" fill="#2e2e6e"/>
<rect x="1701" y="8" width="1" height="1" fill="#2e2e6e"/>
<rect x="1702" y="8" width="1" height="1" fill="#2e2e6e"/>
<rect x="1703" y="8" width="1" height="1" fill="#2e2e6e"/>
<rect x="1704" y="8" width="1" height="1" fill="#2e2e6e"/>
<rect x="1699" y="10" width="1" height="1" fill="#2e2e6e"/>
<rect x="1700" y="10" width="1" height="1" fill="#2e2e6e"/>
<rect x="1701" y="10" width="1" height="1" fill="#2e2e6e"/>
<rect x="1702" y="10" width="1" height="1" fill="#2e2e6e"/>
<rect x="1703" y="10" width="1" height="1" fill="#2e2e6e"/>
<rect x="1699" y="13" width="1" height="1" fill="#2e2e6e"/>
<rect x="1700" y="13" width="1" height="1" fill="#2e2e6e"/>
<rect x="1701" y="13" width="1" height="1" fill="#2e2e6e"/>
<rect x="1702" y="13" width="1" height="1" fill="#2e2e6e"/>
<rect x="1703" y="13" width="1" height="1" fill="#2e2e6e"/>
<rect x="1704" y="8" width="1" height="1" fill="#2e2e6e"/>
<rect x="1704" y="9" width="1" height="1" fill="#2e2e6e"/>
<rect x="1704" y="10" width="1" height="1" fill="#2e2e6e"/>
<rect x="1704" y="11" width="1" height="1" fill="#2e2e6e"/>
<rect x="1704" y="12" width="1" height="1" fill="#2e2e6e"/>
<rect x="1704" y="13" width="1" height="1" fill="#2e2e6e"/>
<rect x="1704" y="14" width="1" height="1" fill="#2e2e6e"/>
<rect x="1704" y="15" width="1" height="1" fill="#2e2e6e"/>
<rect x="1704" y="16" width="1" height="1" fill="#2e2e6e"/>
<rect x="1702" y="16" width="1" height="1" fill="#2e2e6e"/>
<rect x="1703" y="16" width="1" height="1" fill="#2e2e6e"/>
<rect x="1" y="33" width="1840" height="1" fill="#ececf0"/>
<rect x="1" y="34" width="1839" height="1" fill="#c6d1df"/>
<rect x="1839" y="34" width="1" height="554" fill="#c6d1df"/>
<rect x="1" y="587" width="1839" height="1" fill="#c6d1df"/>
<rect x="1" y="36" width="1" height="552" fill="#e0e0e4"/>
<rect x="3" y="36" width="1" height="551" fill="#e0e0e4"/>
<rect x="75" y="36" width="1" height="551" fill="#e0e0e4"/>
<rect x="147" y="36" width="1" height="551" fill="#e0e0e4"/>
<rect x="219" y="36" width="1" height="551" fill="#e0e0e4"/>
<rect x="291" y="36" width="1" height="551" fill="#e0e0e4"/>
<rect x="363" y="36" width="1" height="551" fill="#e0e0e4"/>
<rect x="435" y="36" width="1" height="551" fill="#e0e0e4"/>
<rect x="507" y="36" width="1" height="551" fill="#e0e0e4"/>
<rect x="579" y="36" width="1" height="551" fill="#e0e0e4"/>
<rect x="651" y="36" width="1" height="551" fill="#e0e0e4"/>
<rect x="723" y="36" width="1" height="551" fill="#e0e0e4"/>
<rect x="795" y="36" width="1" height="551" fill="#e0e0e4"/>
<rect x="867" y="36" width="1" height="551" fill="#e0e0e4"/>
<rect x="939" y="36" width="1" height="551" fill="#e0e0e4"/>
<rect x="1011" y="36" width="1" height="551" fill="#e0e0e4"/>
<rect x="1083" y="36" width="1" height="551" fill="#e0e0e4"/>
<rect x="1155" y="36" width="1" height="551" fill="#e0e0e4"/>
<rect x="1227" y="36" width="1" height="551" fill="#e0e0e4"/>
<rect x="1299" y="36" width="1" height="551" fill="#e0e0e4"/>
<rect x="1371" y="36" width="1" height="551" fill="#e0e0e4"/>
<rect x="1443" y="36" width="1" height="551" fill="#e0e0e4"/>
<rect x="1515" y="36" width="1" height="551" fill="#e0e0e4"/>
<rect x="1587" y="36" width="1" height="551" fill="#e0e0e4"/>
<rect x="1659" y="36" width="1" height="551" fill="#e0e0e4"/>
<rect x="1731" y="36" width="1" height="551" fill="#e0e0e4"/>
<rect x="1803" y="36" width="1" height="551" fill="#e0e0e4"/>
<rect x="2" y="39" width="1837" height="1" fill="#e0e0e4"/>
<rect x="2" y="96" width="1837" height="1" fill="#e0e0e4"/>
<rect x="2" y="153" width="1837" height="1" fill="#e0e0e4"/>
<rect x="2" y="211" width="1837" height="1" fill="#e0e0e4"/>
<rect x="2" y="268" width="1837" height="1" fill="#e0e0e4"/>
<rect x="2" y="325" width="1837" height="1" fill="#e0e0e4"/>
<rect x="2" y="382" width="1837" height="1" fill="#e0e0e4"/>
<rect x="2" y="439" width="1837" height="1" fill="#e0e0e4"/>
<rect x="2" y="496" width="1837" height="1" fill="#e0e0e4"/>
<rect x="2" y="553" width="1837" height="1" fill="#e0e0e4"/>
<rect x="123" y="35" width="1" height="2" fill="#c8d2e0"/>
<rect x="123" y="32" width="1" height="2" fill="#404040"/>
<rect x="299" y="35" width="1" height="2" fill="#c8d2e0"/>
<rect x="299" y="32" width="1" height="2" fill="#404040"/>
<rect x="475" y="35" width="1" height="2" fill="#c8d2e0"/>
<rect x="475" y="32" width="1" height="2" fill="#404040"/>
<rect x="643" y="35" width="1" height="2" fill="#c8d2e0"/>
<rect x="643" y="32" width="1" height="2" fill="#404040"/>
<rect x="819" y="35" width="1" height="2" fill="#c8d2e0"/>
<rect x="819" y="32" width="1" height="2" fill="#404040"/>
<rect x="1003" y="35" width="1" height="2" fill="#c8d2e0"/>
<rect x="1003" y="32" width="1" height="2" fill="#404040"/>
<rect x="1171" y="35" width="1" height="2" fill="#c8d2e0"/>
<rect x="1171" y="32" width="1" height="2" fill="#404040"/>
<rect x="1347" y="35" width="1" height="2" fill="#c8d2e0"/>
<rect x="1347" y="32" width="1" height="2" fill="#404040"/>
<rect x="1523" y="35" width="1" height="2" fill="#c8d2e0"/>
<rect x="1523" y="32" width="1" height="2" fill="#404040"/>
<rect x="1691" y="35" width="1" height="2" fill="#c8d2e0"/>
<rect x="1691" y="32" width="1" height="2" fill="#404040"/>
<rect x="2" y="368" width="1" height="1" fill="#d6d6d6"/>
<g stroke="#d6d6d6" stroke-width="1" shape-rendering="crispEdges">
<line x1="455.5" y1="35" x2="455.5" y2="587" stroke-dasharray="3,3"/>
<line x1="463.5" y1="35" x2="463.5" y2="587" stroke-dasharray="3,3"/>
<line x1="7" y1="368.5" x2="1839" y2="368.5" stroke-dasharray="3,3"/>
</g>
<rect x="3" y="112" width="1" height="23" fill="#0060c0"/>
<rect x="1" y="122" width="5" height="13" fill="#0060c0"/>
<rect x="11" y="107" width="1" height="32" fill="#dc0000"/>
<rect x="9" y="122" width="5" height="14" fill="#dc0000"/>
<rect x="19" y="123" width="1" height="51" fill="#dc0000"/>
<rect x="17" y="135" width="5" height="36" fill="#dc0000"/>
<rect x="27" y="137" width="1" height="36" fill="#0060c0"/>
<rect x="25" y="162" width="5" height="9" fill="#0060c0"/>
<rect x="35" y="132" width="1" height="31" fill="#0060c0"/>
<rect x="33" y="144" width="5" height="19" fill="#0060c0"/>
<rect x="43" y="128" width="1" height="20" fill="#0060c0"/>
<rect x="41" y="138" width="5" height="7" fill="#0060c0"/>
<rect x="51" y="134" width="1" height="68" fill="#dc0000"/>
<rect x="49" y="138" width="5" height="52" fill="#dc0000"/>
<rect x="59" y="182" width="1" height="34" fill="#0060c0"/>
<rect x="57" y="183" width="5" height="7" fill="#0060c0"/>
<rect x="67" y="160" width="1" height="38" fill="#dc0000"/>
<rect x="65" y="183" width="5" height="14" fill="#dc0000"/>
<rect x="75" y="177" width="1" height="38" fill="#dc0000"/>
<rect x="73" y="196" width="5" height="10" fill="#dc0000"/>
<rect x="83" y="188" width="1" height="50" fill="#dc0000"/>
<rect x="81" y="206" width="5" height="2" fill="#dc0000"/>
<rect x="91" y="201" width="1" height="32" fill="#dc0000"/>
<rect x="89" y="207" width="5" height="5" fill="#dc0000"/>
<rect x="99" y="185" width="1" height="27" fill="#0060c0"/>
<rect x="97" y="200" width="5" height="12" fill="#0060c0"/>
<rect x="107" y="166" width="1" height="37" fill="#0060c0"/>
<rect x="105" y="190" width="5" height="10" fill="#0060c0"/>
<rect x="115" y="168" width="1" height="33" fill="#0060c0"/>
<rect x="113" y="181" width="5" height="10" fill="#0060c0"/>
<rect x="123" y="159" width="1" height="40" fill="#dc0000"/>
<rect x="121" y="180" width="5" height="17" fill="#dc0000"/>
<rect x="131" y="178" width="1" height="43" fill="#dc0000"/>
<rect x="129" y="196" width="5" height="8" fill="#dc0000"/>
<rect x="139" y="191" width="1" height="24" fill="#dc0000"/>
<rect x="137" y="203" width="5" height="9" fill="#dc0000"/>
<rect x="147" y="190" width="1" height="29" fill="#dc0000"/>
<rect x="145" y="211" width="5" height="5" fill="#dc0000"/>
<rect x="155" y="210" width="1" height="82" fill="#dc0000"/>
<rect x="153" y="215" width="5" height="71" fill="#dc0000"/>
<rect x="163" y="268" width="1" height="20" fill="#dc0000"/>
<rect x="161" y="285" width="5" height="2" fill="#dc0000"/>
<rect x="171" y="279" width="1" height="33" fill="#dc0000"/>
<rect x="169" y="286" width="5" height="13" fill="#dc0000"/>
<rect x="179" y="291" width="1" height="40" fill="#dc0000"/>
<rect x="177" y="298" width="5" height="16" fill="#dc0000"/>
<rect x="187" y="288" width="1" height="39" fill="#dc0000"/>
<rect x="185" y="313" width="5" height="4" fill="#dc0000"/>
<rect x="195" y="299" width="1" height="23" fill="#0060c0"/>
<rect x="193" y="308" width="5" height="9" fill="#0060c0"/>
<rect x="203" y="294" width="1" height="31" fill="#dc0000"/>
<rect x="201" y="308" width="5" height="7" fill="#dc0000"/>
<rect x="211" y="304" width="1" height="38" fill="#dc0000"/>
<rect x="209" y="314" width="5" height="13" fill="#dc0000"/>
<rect x="219" y="267" width="1" height="67" fill="#0060c0"/>
<rect x="217" y="285" width="5" height="42" fill="#0060c0"/>
<rect x="227" y="262" width="1" height="41" fill="#0060c0"/>
<rect x="225" y="277" width="5" height="9" fill="#0060c0"/>
<rect x="235" y="239" width="1" height="43" fill="#0060c0"/>
<rect x="233" y="251" width="5" height="27" fill="#0060c0"/>
<rect x="243" y="231" width="1" height="27" fill="#0060c0"/>
<rect x="241" y="235" width="5" height="17" fill="#0060c0"/>
<rect x="251" y="223" width="1" height="21" fill="#0060c0"/>
<rect x="249" y="227" width="5" height="9" fill="#0060c0"/>
<rect x="259" y="212" width="1" height="29" fill="#0060c0"/>
<rect x="257" y="222" width="5" height="6" fill="#0060c0"/>
<rect x="267" y="166" width="1" height="57" fill="#0060c0"/>
<rect x="265" y="200" width="5" height="23" fill="#0060c0"/>
<rect x="275" y="198" width="1" height="30" fill="#dc0000"/>
<rect x="273" y="200" width="5" height="15" fill="#dc0000"/>
<rect x="283" y="213" width="1" height="38" fill="#dc0000"/>
<rect x="281" y="214" width="5" height="30" fill="#dc0000"/>
<rect x="291" y="233" width="1" height="27" fill="#dc0000"/>
<rect x="289" y="243" width="5" height="7" fill="#dc0000"/>
<rect x="299" y="192" width="1" height="62" fill="#0060c0"/>
<rect x="297" y="202" width="5" height="48" fill="#0060c0"/>
<rect x="307" y="195" width="1" height="27" fill="#dc0000"/>
<rect x="305" y="202" width="5" height="4" fill="#dc0000"/>
<rect x="315" y="187" width="1" height="24" fill="#0060c0"/>
<rect x="313" y="188" width="5" height="18" fill="#0060c0"/>
<rect x="323" y="156" width="1" height="32" fill="#0060c0"/>
<rect x="321" y="177" width="5" height="11" fill="#0060c0"/>
<rect x="331" y="176" width="1" height="18" fill="#dc0000"/>
<rect x="329" y="177" width="5" height="14" fill="#dc0000"/>
<rect x="339" y="184" width="1" height="32" fill="#dc0000"/>
<rect x="337" y="190" width="5" height="16" fill="#dc0000"/>
<rect x="347" y="204" width="1" height="24" fill="#dc0000"/>
<rect x="345" y="205" width="5" height="19" fill="#dc0000"/>
<rect x="355" y="187" width="1" height="39" fill="#0060c0"/>
<rect x="353" y="194" width="5" height="30" fill="#0060c0"/>
<rect x="363" y="190" width="1" height="29" fill="#dc0000"/>
<rect x="361" y="194" width="5" height="23" fill="#dc0000"/>
<rect x="371" y="209" width="1" height="38" fill="#dc0000"/>
<rect x="369" y="216" width="5" height="13" fill="#dc0000"/>
<rect x="379" y="201" width="1" height="35" fill="#0060c0"/>
<rect x="377" y="205" width="5" height="24" fill="#0060c0"/>
<rect x="387" y="191" width="1" height="32" fill="#dc0000"/>
<rect x="385" y="205" width="5" height="11" fill="#dc0000"/>
<rect x="395" y="194" width="1" height="23" fill="#0060c0"/>
<rect x="393" y="202" width="5" height="14" fill="#0060c0"/>
<rect x="403" y="191" width="1" height="39" fill="#dc0000"/>
<rect x="401" y="202" width="5" height="19" fill="#dc0000"/>
<rect x="411" y="202" width="1" height="25" fill="#0060c0"/>
<rect x="409" y="205" width="5" height="16" fill="#0060c0"/>
<rect x="419" y="200" width="1" height="43" fill="#dc0000"/>
<rect x="417" y="205" width="5" height="37" fill="#dc0000"/>
<rect x="427" y="216" width="1" height="31" fill="#0060c0"/>
<rect x="425" y="225" width="5" height="17" fill="#0060c0"/>
<rect x="435" y="221" width="1" height="46" fill="#dc0000"/>
<rect x="433" y="225" width="5" height="34" fill="#dc0000"/>
<rect x="443" y="195" width="1" height="64" fill="#0060c0"/>
<rect x="441" y="206" width="5" height="53" fill="#0060c0"/>
<rect x="451" y="177" width="1" height="35" fill="#0060c0"/>
<rect x="449" y="183" width="5" height="24" fill="#0060c0"/>
<rect x="459" y="180" width="1" height="28" fill="#dc0000"/>
<rect x="457" y="183" width="5" height="18" fill="#dc0000"/>
<rect x="467" y="195" width="1" height="68" fill="#dc0000"/>
<rect x="465" y="200" width="5" height="48" fill="#dc0000"/>
<rect x="475" y="245" width="1" height="35" fill="#dc0000"/>
<rect x="473" y="247" width="5" height="15" fill="#dc0000"/>
<rect x="483" y="228" width="1" height="36" fill="#0060c0"/>
<rect x="481" y="238" width="5" height="24" fill="#0060c0"/>
<rect x="491" y="212" width="1" height="31" fill="#0060c0"/>
<rect x="489" y="226" width="5" height="13" fill="#0060c0"/>
<rect x="499" y="216" width="1" height="22" fill="#dc0000"/>
<rect x="497" y="226" width="5" height="4" fill="#dc0000"/>
<rect x="507" y="227" width="1" height="32" fill="#dc0000"/>
<rect x="505" y="228" width="5" height="20" fill="#dc0000"/>
<rect x="515" y="226" width="1" height="26" fill="#0060c0"/>
<rect x="513" y="237" width="5" height="11" fill="#0060c0"/>
<rect x="523" y="231" width="1" height="28" fill="#dc0000"/>
<rect x="521" y="237" width="5" height="12" fill="#dc0000"/>
<rect x="531" y="218" width="1" height="37" fill="#0060c0"/>
<rect x="529" y="225" width="5" height="24" fill="#0060c0"/>
<rect x="539" y="169" width="1" height="62" fill="#0060c0"/>
<rect x="537" y="175" width="5" height="51" fill="#0060c0"/>
<rect x="547" y="149" width="1" height="33" fill="#0060c0"/>
<rect x="545" y="163" width="5" height="13" fill="#0060c0"/>
<rect x="555" y="152" width="1" height="33" fill="#0060c0"/>
<rect x="553" y="156" width="5" height="8" fill="#0060c0"/>
<rect x="563" y="138" width="1" height="23" fill="#0060c0"/>
<rect x="561" y="153" width="5" height="4" fill="#0060c0"/>
<rect x="571" y="153" width="1" height="44" fill="#dc0000"/>
<rect x="569" y="153" width="5" height="42" fill="#dc0000"/>
<rect x="579" y="181" width="1" height="22" fill="#0060c0"/>
<rect x="577" y="189" width="5" height="6" fill="#0060c0"/>
<rect x="587" y="184" width="1" height="22" fill="#dc0000"/>
<rect x="585" y="189" width="5" height="9" fill="#dc0000"/>
<rect x="595" y="178" width="1" height="28" fill="#0060c0"/>
<rect x="593" y="196" width="5" height="2" fill="#0060c0"/>
<rect x="603" y="191" width="1" height="12" fill="#0060c0"/>
<rect x="601" y="196" width="5" height="2" fill="#0060c0"/>
<rect x="611" y="195" width="1" height="48" fill="#dc0000"/>
<rect x="609" y="197" width="5" height="44" fill="#dc0000"/>
<rect x="619" y="232" width="1" height="16" fill="#0060c0"/>
<rect x="617" y="239" width="5" height="1" fill="#0060c0"/>
<rect x="627" y="230" width="1" height="26" fill="#0060c0"/>
<rect x="625" y="238" width="5" height="2" fill="#0060c0"/>
<rect x="635" y="225" width="1" height="19" fill="#0060c0"/>
<rect x="633" y="233" width="5" height="6" fill="#0060c0"/>
<rect x="643" y="203" width="1" height="43" fill="#dc0000"/>
<rect x="641" y="233" width="5" height="4" fill="#dc0000"/>
<rect x="651" y="220" width="1" height="23" fill="#0060c0"/>
<rect x="649" y="227" width="5" height="10" fill="#0060c0"/>
<rect x="659" y="222" width="1" height="35" fill="#dc0000"/>
<rect x="657" y="227" width="5" height="19" fill="#dc0000"/>
<rect x="667" y="243" width="1" height="30" fill="#dc0000"/>
<rect x="665" y="245" width="5" height="20" fill="#dc0000"/>
<rect x="675" y="261" width="1" height="34" fill="#dc0000"/>
<rect x="673" y="264" width="5" height="14" fill="#dc0000"/>
<rect x="683" y="263" width="1" height="18" fill="#0060c0"/>
<rect x="681" y="270" width="5" height="8" fill="#0060c0"/>
<rect x="691" y="251" width="1" height="22" fill="#0060c0"/>
<rect x="689" y="264" width="5" height="7" fill="#0060c0"/>
<rect x="699" y="229" width="1" height="37" fill="#0060c0"/>
<rect x="697" y="243" width="5" height="22" fill="#0060c0"/>
<rect x="707" y="239" width="1" height="27" fill="#dc0000"/>
<rect x="705" y="243" width="5" height="10" fill="#dc0000"/>
<rect x="715" y="247" width="1" height="17" fill="#dc0000"/>
<rect x="713" y="252" width="5" height="2" fill="#dc0000"/>
<rect x="723" y="233" width="1" height="39" fill="#0060c0"/>
<rect x="721" y="242" width="5" height="12" fill="#0060c0"/>
<rect x="731" y="239" width="1" height="25" fill="#dc0000"/>
<rect x="729" y="242" width="5" height="10" fill="#dc0000"/>
<rect x="739" y="236" width="1" height="32" fill="#0060c0"/>
<rect x="737" y="244" width="5" height="9" fill="#0060c0"/>
<rect x="747" y="199" width="1" height="46" fill="#0060c0"/>
<rect x="745" y="207" width="5" height="38" fill="#0060c0"/>
<rect x="755" y="202" width="1" height="12" fill="#dc0000"/>
<rect x="753" y="207" width="5" height="5" fill="#dc0000"/>
<rect x="763" y="210" width="1" height="41" fill="#dc0000"/>
<rect x="761" y="211" width="5" height="33" fill="#dc0000"/>
<rect x="771" y="239" width="1" height="25" fill="#dc0000"/>
<rect x="769" y="243" width="5" height="17" fill="#dc0000"/>
<rect x="779" y="257" width="1" height="24" fill="#dc0000"/>
<rect x="777" y="260" width="5" height="8" fill="#dc0000"/>
<rect x="787" y="262" width="1" height="14" fill="#dc0000"/>
<rect x="785" y="267" width="5" height="7" fill="#dc0000"/>
<rect x="795" y="260" width="1" height="22" fill="#0060c0"/>
<rect x="793" y="268" width="5" height="6" fill="#0060c0"/>
<rect x="803" y="240" width="1" height="31" fill="#0060c0"/>
<rect x="801" y="257" width="5" height="12" fill="#0060c0"/>
<rect x="811" y="256" width="1" height="30" fill="#dc0000"/>
<rect x="809" y="257" width="5" height="19" fill="#dc0000"/>
<rect x="819" y="269" width="1" height="16" fill="#dc0000"/>
<rect x="817" y="275" width="5" height="9" fill="#dc0000"/>
<rect x="827" y="281" width="1" height="28" fill="#dc0000"/>
<rect x="825" y="283" width="5" height="6" fill="#dc0000"/>
<rect x="835" y="280" width="1" height="11" fill="#0060c0"/>
<rect x="833" y="282" width="5" height="7" fill="#0060c0"/>
<rect x="843" y="269" width="1" height="27" fill="#0060c0"/>
<rect x="841" y="279" width="5" height="4" fill="#0060c0"/>
<rect x="851" y="279" width="1" height="51" fill="#dc0000"/>
<rect x="849" y="279" width="5" height="36" fill="#dc0000"/>
<rect x="859" y="292" width="1" height="39" fill="#0060c0"/>
<rect x="857" y="307" width="5" height="8" fill="#0060c0"/>
<rect x="867" y="285" width="1" height="26" fill="#0060c0"/>
<rect x="865" y="304" width="5" height="4" fill="#0060c0"/>
<rect x="875" y="291" width="1" height="17" fill="#0060c0"/>
<rect x="873" y="295" width="5" height="10" fill="#0060c0"/>
<rect x="883" y="293" width="1" height="29" fill="#dc0000"/>
<rect x="881" y="295" width="5" height="13" fill="#dc0000"/>
<rect x="891" y="304" width="1" height="14" fill="#dc0000"/>
<rect x="889" y="307" width="5" height="5" fill="#dc0000"/>
<rect x="899" y="310" width="1" height="30" fill="#dc0000"/>
<rect x="897" y="311" width="5" height="17" fill="#dc0000"/>
<rect x="907" y="326" width="1" height="17" fill="#dc0000"/>
<rect x="905" y="327" width="5" height="9" fill="#dc0000"/>
<rect x="915" y="335" width="1" height="33" fill="#dc0000"/>
<rect x="913" y="336" width="5" height="26" fill="#dc0000"/>
<rect x="923" y="361" width="1" height="142" fill="#dc0000"/>
<rect x="921" y="361" width="5" height="87" fill="#dc0000"/>
<rect x="931" y="416" width="1" height="32" fill="#0060c0"/>
<rect x="929" y="437" width="5" height="11" fill="#0060c0"/>
<rect x="939" y="432" width="1" height="37" fill="#dc0000"/>
<rect x="937" y="437" width="5" height="17" fill="#dc0000"/>
<rect x="947" y="426" width="1" height="42" fill="#dc0000"/>
<rect x="945" y="453" width="5" height="9" fill="#dc0000"/>
<rect x="955" y="436" width="1" height="64" fill="#0060c0"/>
<rect x="953" y="442" width="5" height="20" fill="#0060c0"/>
<rect x="963" y="428" width="1" height="37" fill="#dc0000"/>
<rect x="961" y="442" width="5" height="12" fill="#dc0000"/>
<rect x="971" y="441" width="1" height="17" fill="#0060c0"/>
<rect x="969" y="450" width="5" height="5" fill="#0060c0"/>
<rect x="979" y="435" width="1" height="25" fill="#0060c0"/>
<rect x="977" y="446" width="5" height="5" fill="#0060c0"/>
<rect x="987" y="444" width="1" height="34" fill="#dc0000"/>
<rect x="985" y="446" width="5" height="21" fill="#dc0000"/>
<rect x="995" y="432" width="1" height="53" fill="#0060c0"/>
<rect x="993" y="449" width="5" height="18" fill="#0060c0"/>
<rect x="1003" y="446" width="1" height="25" fill="#dc0000"/>
<rect x="1001" y="449" width="5" height="22" fill="#dc0000"/>
<rect x="1011" y="452" width="1" height="30" fill="#0060c0"/>
<rect x="1009" y="468" width="5" height="3" fill="#0060c0"/>
<rect x="1019" y="458" width="1" height="20" fill="#dc0000"/>
<rect x="1017" y="468" width="5" height="7" fill="#dc0000"/>
<rect x="1027" y="454" width="1" height="22" fill="#0060c0"/>
<rect x="1025" y="463" width="5" height="12" fill="#0060c0"/>
<rect x="1035" y="441" width="1" height="36" fill="#0060c0"/>
<rect x="1033" y="454" width="5" height="10" fill="#0060c0"/>
<rect x="1043" y="420" width="1" height="34" fill="#0060c0"/>
<rect x="1041" y="429" width="5" height="25" fill="#0060c0"/>
<rect x="1051" y="396" width="1" height="57" fill="#0060c0"/>
<rect x="1049" y="419" width="5" height="10" fill="#0060c0"/>
<rect x="1059" y="381" width="1" height="53" fill="#0060c0"/>
<rect x="1057" y="384" width="5" height="36" fill="#0060c0"/>
<rect x="1067" y="379" width="1" height="29" fill="#dc0000"/>
<rect x="1065" y="384" width="5" height="22" fill="#dc0000"/>
<rect x="1075" y="392" width="1" height="19" fill="#dc0000"/>
<rect x="1073" y="405" width="5" height="2" fill="#dc0000"/>
<rect x="1083" y="388" width="1" height="22" fill="#0060c0"/>
<rect x="1081" y="399" width="5" height="8" fill="#0060c0"/>
<rect x="1091" y="392" width="1" height="25" fill="#0060c0"/>
<rect x="1089" y="399" width="5" height="1" fill="#0060c0"/>
<rect x="1099" y="361" width="1" height="40" fill="#0060c0"/>
<rect x="1097" y="362" width="5" height="39" fill="#0060c0"/>
<rect x="1107" y="317" width="1" height="47" fill="#0060c0"/>
<rect x="1105" y="321" width="5" height="43" fill="#0060c0"/>
<rect x="1115" y="284" width="1" height="43" fill="#0060c0"/>
<rect x="1113" y="301" width="5" height="21" fill="#0060c0"/>
<rect x="1123" y="280" width="1" height="55" fill="#dc0000"/>
<rect x="1121" y="301" width="5" height="13" fill="#dc0000"/>
<rect x="1131" y="311" width="1" height="48" fill="#dc0000"/>
<rect x="1129" y="314" width="5" height="34" fill="#dc0000"/>
<rect x="1139" y="334" width="1" height="65" fill="#dc0000"/>
<rect x="1137" y="347" width="5" height="36" fill="#dc0000"/>
<rect x="1147" y="373" width="1" height="24" fill="#dc0000"/>
<rect x="1145" y="382" width="5" height="2" fill="#dc0000"/>
<rect x="1155" y="347" width="1" height="37" fill="#0060c0"/>
<rect x="1153" y="363" width="5" height="21" fill="#0060c0"/>
<rect x="1163" y="356" width="1" height="24" fill="#0060c0"/>
<rect x="1161" y="359" width="5" height="5" fill="#0060c0"/>
<rect x="1171" y="331" width="1" height="30" fill="#0060c0"/>
<rect x="1169" y="348" width="5" height="13" fill="#0060c0"/>
<rect x="1179" y="343" width="1" height="23" fill="#dc0000"/>
<rect x="1177" y="348" width="5" height="15" fill="#dc0000"/>
<rect x="1187" y="362" width="1" height="26" fill="#dc0000"/>
<rect x="1185" y="362" width="5" height="21" fill="#dc0000"/>
<rect x="1195" y="364" width="1" height="37" fill="#dc0000"/>
<rect x="1193" y="382" width="5" height="8" fill="#dc0000"/>
<rect x="1203" y="383" width="1" height="19" fill="#dc0000"/>
<rect x="1201" y="389" width="5" height="7" fill="#dc0000"/>
<rect x="1211" y="379" width="1" height="18" fill="#0060c0"/>
<rect x="1209" y="390" width="5" height="6" fill="#0060c0"/>
<rect x="1219" y="382" width="1" height="54" fill="#dc0000"/>
<rect x="1217" y="390" width="5" height="33" fill="#dc0000"/>
<rect x="1227" y="406" width="1" height="24" fill="#0060c0"/>
<rect x="1225" y="415" width="5" height="8" fill="#0060c0"/>
<rect x="1235" y="411" width="1" height="31" fill="#dc0000"/>
<rect x="1233" y="415" width="5" height="8" fill="#dc0000"/>
<rect x="1243" y="416" width="1" height="15" fill="#0060c0"/>
<rect x="1241" y="419" width="5" height="4" fill="#0060c0"/>
<rect x="1251" y="419" width="1" height="14" fill="#dc0000"/>
<rect x="1249" y="419" width="5" height="10" fill="#dc0000"/>
<rect x="1259" y="385" width="1" height="44" fill="#0060c0"/>
<rect x="1257" y="395" width="5" height="34" fill="#0060c0"/>
<rect x="1267" y="358" width="1" height="46" fill="#0060c0"/>
<rect x="1265" y="368" width="5" height="28" fill="#0060c0"/>
<rect x="1275" y="345" width="1" height="31" fill="#0060c0"/>
<rect x="1273" y="350" width="5" height="19" fill="#0060c0"/>
<rect x="1283" y="349" width="1" height="23" fill="#dc0000"/>
<rect x="1281" y="350" width="5" height="14" fill="#dc0000"/>
<rect x="1291" y="356" width="1" height="34" fill="#dc0000"/>
<rect x="1289" y="363" width="5" height="21" fill="#dc0000"/>
<rect x="1299" y="361" width="1" height="27" fill="#0060c0"/>
<rect x="1297" y="371" width="5" height="13" fill="#0060c0"/>
<rect x="1307" y="311" width="1" height="61" fill="#0060c0"/>
<rect x="1305" y="316" width="5" height="56" fill="#0060c0"/>
<rect x="1315" y="316" width="1" height="30" fill="#dc0000"/>
<rect x="1313" y="316" width="5" height="19" fill="#dc0000"/>
<rect x="1323" y="330" width="1" height="45" fill="#dc0000"/>
<rect x="1321" y="334" width="5" height="34" fill="#dc0000"/>
<rect x="1331" y="360" width="1" height="24" fill="#dc0000"/>
<rect x="1329" y="367" width="5" height="11" fill="#dc0000"/>
<rect x="1339" y="376" width="1" height="36" fill="#dc0000"/>
<rect x="1337" y="377" width="5" height="30" fill="#dc0000"/>
<rect x="1347" y="396" width="1" height="18" fill="#dc0000"/>
<rect x="1345" y="406" width="5" height="4" fill="#dc0000"/>
<rect x="1355" y="346" width="1" height="83" fill="#0060c0"/>
<rect x="1353" y="352" width="5" height="58" fill="#0060c0"/>
<rect x="1363" y="344" width="1" height="22" fill="#dc0000"/>
<rect x="1361" y="352" width="5" height="7" fill="#dc0000"/>
<rect x="1371" y="323" width="1" height="36" fill="#0060c0"/>
<rect x="1369" y="332" width="5" height="27" fill="#0060c0"/>
<rect x="1379" y="317" width="1" height="27" fill="#dc0000"/>
<rect x="1377" y="332" width="5" height="5" fill="#dc0000"/>
<rect x="1387" y="323" width="1" height="32" fill="#dc0000"/>
<rect x="1385" y="336" width="5" height="16" fill="#dc0000"/>
<rect x="1395" y="304" width="1" height="48" fill="#0060c0"/>
<rect x="1393" y="312" width="5" height="40" fill="#0060c0"/>
<rect x="1403" y="282" width="1" height="31" fill="#0060c0"/>
<rect x="1401" y="294" width="5" height="19" fill="#0060c0"/>
<rect x="1411" y="283" width="1" height="37" fill="#0060c0"/>
<rect x="1409" y="283" width="5" height="12" fill="#0060c0"/>
<rect x="1419" y="235" width="1" height="59" fill="#0060c0"/>
<rect x="1417" y="247" width="5" height="37" fill="#0060c0"/>
<rect x="1427" y="231" width="1" height="38" fill="#dc0000"/>
<rect x="1425" y="247" width="5" height="3" fill="#dc0000"/>
<rect x="1435" y="247" width="1" height="22" fill="#dc0000"/>
<rect x="1433" y="250" width="5" height="15" fill="#dc0000"/>
<rect x="1443" y="262" width="1" height="21" fill="#dc0000"/>
<rect x="1441" y="264" width="5" height="15" fill="#dc0000"/>
<rect x="1451" y="255" width="1" height="29" fill="#0060c0"/>
<rect x="1449" y="266" width="5" height="13" fill="#0060c0"/>
<rect x="1459" y="259" width="1" height="35" fill="#dc0000"/>
<rect x="1457" y="266" width="5" height="21" fill="#dc0000"/>
<rect x="1467" y="276" width="1" height="21" fill="#dc0000"/>
<rect x="1465" y="286" width="5" height="4" fill="#dc0000"/>
<rect x="1475" y="259" width="1" height="46" fill="#dc0000"/>
<rect x="1473" y="289" width="5" height="5" fill="#dc0000"/>
<rect x="1483" y="281" width="1" height="15" fill="#dc0000"/>
<rect x="1481" y="292" width="5" height="4" fill="#dc0000"/>
<rect x="1491" y="283" width="1" height="18" fill="#0060c0"/>
<rect x="1489" y="287" width="5" height="9" fill="#0060c0"/>
<rect x="1499" y="251" width="1" height="68" fill="#dc0000"/>
<rect x="1497" y="287" width="5" height="26" fill="#dc0000"/>
<rect x="1507" y="297" width="1" height="39" fill="#dc0000"/>
<rect x="1505" y="312" width="5" height="24" fill="#dc0000"/>
<rect x="1515" y="326" width="1" height="24" fill="#dc0000"/>
<rect x="1513" y="335" width="5" height="10" fill="#dc0000"/>
<rect x="1523" y="342" width="1" height="22" fill="#dc0000"/>
<rect x="1521" y="344" width="5" height="20" fill="#dc0000"/>
<rect x="1531" y="354" width="1" height="51" fill="#dc0000"/>
<rect x="1529" y="363" width="5" height="37" fill="#dc0000"/>
<rect x="1539" y="388" width="1" height="37" fill="#dc0000"/>
<rect x="1537" y="399" width="5" height="24" fill="#dc0000"/>
<rect x="1547" y="413" width="1" height="19" fill="#dc0000"/>
<rect x="1545" y="422" width="5" height="10" fill="#dc0000"/>
<rect x="1555" y="416" width="1" height="55" fill="#dc0000"/>
<rect x="1553" y="431" width="5" height="34" fill="#dc0000"/>
<rect x="1563" y="450" width="1" height="16" fill="#0060c0"/>
<rect x="1561" y="457" width="5" height="8" fill="#0060c0"/>
<rect x="1571" y="451" width="1" height="21" fill="#dc0000"/>
<rect x="1569" y="457" width="5" height="6" fill="#dc0000"/>
<rect x="1579" y="454" width="1" height="20" fill="#dc0000"/>
<rect x="1577" y="462" width="5" height="9" fill="#dc0000"/>
<rect x="1587" y="463" width="1" height="34" fill="#dc0000"/>
<rect x="1585" y="471" width="5" height="3" fill="#dc0000"/>
<rect x="1595" y="466" width="1" height="20" fill="#dc0000"/>
<rect x="1593" y="474" width="5" height="3" fill="#dc0000"/>
<rect x="1603" y="444" width="1" height="37" fill="#dc0000"/>
<rect x="1601" y="476" width="5" height="4" fill="#dc0000"/>
<rect x="1611" y="474" width="1" height="43" fill="#dc0000"/>
<rect x="1609" y="479" width="5" height="28" fill="#dc0000"/>
<rect x="1619" y="496" width="1" height="24" fill="#0060c0"/>
<rect x="1617" y="506" width="5" height="2" fill="#0060c0"/>
<rect x="1627" y="469" width="1" height="39" fill="#0060c0"/>
<rect x="1625" y="480" width="5" height="28" fill="#0060c0"/>
<rect x="1635" y="467" width="1" height="26" fill="#dc0000"/>
<rect x="1633" y="480" width="5" height="10" fill="#dc0000"/>
<rect x="1643" y="489" width="1" height="25" fill="#dc0000"/>
<rect x="1641" y="490" width="5" height="20" fill="#dc0000"/>
<rect x="1651" y="483" width="1" height="27" fill="#0060c0"/>
<rect x="1649" y="494" width="5" height="16" fill="#0060c0"/>
<rect x="1659" y="484" width="1" height="28" fill="#dc0000"/>
<rect x="1657" y="496" width="5" height="10" fill="#dc0000"/>
<rect x="1667" y="497" width="1" height="11" fill="#0060c0"/>
<rect x="1665" y="503" width="5" height="3" fill="#0060c0"/>
<rect x="1675" y="500" width="1" height="47" fill="#dc0000"/>
<rect x="1673" y="503" width="5" height="34" fill="#dc0000"/>
<rect x="1683" y="509" width="1" height="37" fill="#0060c0"/>
<rect x="1681" y="521" width="5" height="16" fill="#0060c0"/>
<rect x="1691" y="499" width="1" height="23" fill="#0060c0"/>
<rect x="1689" y="510" width="5" height="12" fill="#0060c0"/>
<rect x="1699" y="505" width="1" height="47" fill="#dc0000"/>
<rect x="1697" y="510" width="5" height="37" fill="#dc0000"/>
<rect x="1707" y="519" width="1" height="43" fill="#0060c0"/>
<rect x="1705" y="526" width="5" height="21" fill="#0060c0"/>
<rect x="1715" y="466" width="1" height="69" fill="#0060c0"/>
<rect x="1713" y="471" width="5" height="56" fill="#0060c0"/>
<rect x="1723" y="470" width="1" height="46" fill="#dc0000"/>
<rect x="1721" y="471" width="5" height="35" fill="#dc0000"/>
<rect x="1731" y="488" width="1" height="25" fill="#0060c0"/>
<rect x="1729" y="497" width="5" height="9" fill="#0060c0"/>
<rect x="1739" y="490" width="1" height="8" fill="#0060c0"/>
<rect x="1737" y="491" width="5" height="7" fill="#0060c0"/>
<polyline points="1.5,62 3.5,66.0 11.5,73.0 19.5,88.5 27.5,104.0 35.5,119.0 43.5,133.0 51.5,144.0 59.5,151.9 67.5,160.6 75.5,169.3 83.5,174.3 91.5,180.6 99.5,190.2 107.5,199.1 115.5,199.2 123.5,198.9 131.5,198.9 139.5,198.5 147.5,199.1 155.5,199.6 163.5,211.6 171.5,225.2 179.5,242.0 187.5,258.7 195.5,275.0 203.5,288.9 211.5,302.9 219.5,308.9 227.5,308.9 235.5,306.0 243.5,297.3 251.5,285.6 259.5,274.2 267.5,261.2 275.5,243.1 283.5,232.8 291.5,227.8 299.5,227.6 307.5,222.8 315.5,219.6 323.5,214.7 331.5,211.4 339.5,208.0 347.5,202.5 355.5,198.8 363.5,197.6 371.5,199.1 379.5,204.8 387.5,208.8 395.5,212.5 403.5,212.1 411.5,211.7 419.5,213.3 427.5,216.9 435.5,216.4 443.5,224.1 451.5,222.8 459.5,220.0 467.5,217.1 475.5,223.1 483.5,226.1 491.5,228.1 499.5,223.3 507.5,226.4 515.5,235.7 523.5,241.0 531.5,241.3 539.5,236.1 547.5,227.1 555.5,218.2 563.5,208.0 571.5,194.4 579.5,188.4 587.5,179.8 595.5,175.7 603.5,178.9 611.5,183.6 619.5,195.6 627.5,208.0 635.5,214.3 643.5,220.6 651.5,226.2 659.5,230.4 667.5,237.2 675.5,240.6 683.5,246.0 691.5,250.6 699.5,255.1 707.5,256.0 715.5,259.5 723.5,260.8 731.5,257.6 739.5,254.1 747.5,250.5 755.5,242.2 763.5,237.6 771.5,236.3 779.5,237.2 787.5,240.8 795.5,243.8 803.5,247.2 811.5,254.4 819.5,263.6 827.5,269.3 835.5,273.4 843.5,275.8 851.5,276.5 859.5,283.0 867.5,290.2 875.5,294.5 883.5,296.2 891.5,298.8 899.5,302.8 907.5,309.7 915.5,312.7 923.5,320.4 931.5,340.8 939.5,360.9 947.5,381.8 955.5,403.3 963.5,419.7 971.5,436.7 979.5,449.5 987.5,449.3 995.5,453.6 1003.5,453.0 1011.5,454.3 1019.5,458.0 1027.5,460.8 1035.5,462.7 1043.5,463.8 1051.5,458.4 1059.5,454.2 1067.5,441.8 1075.5,432.8 1083.5,423.1 1091.5,414.0 1099.5,406.4 1107.5,397.1 1115.5,383.1 1123.5,371.3 1131.5,358.3 1139.5,349.7 1147.5,347.1 1155.5,344.7 1163.5,344.7 1171.5,350.3 1179.5,357.1 1187.5,364.0 1195.5,369.0 1203.5,370.1 1211.5,371.7 1219.5,375.6 1227.5,384.4 1235.5,394.0 1243.5,402.6 1251.5,408.0 1259.5,413.6 1267.5,413.6 1275.5,410.6 1283.5,400.2 1291.5,392.7 1299.5,387.2 1307.5,380.4 1315.5,364.3 1323.5,355.3 1331.5,355.1 1339.5,358.9 1347.5,365.1 1355.5,368.8 1363.5,365.9 1371.5,372.0 1379.5,371.8 1387.5,367.3 1395.5,363.8 1403.5,350.6 1411.5,334.1 1419.5,324.3 1427.5,308.3 1435.5,296.5 1443.5,286.3 1451.5,275.8 1459.5,269.1 1467.5,267.8 1475.5,268.6 1483.5,275.1 1491.5,281.7 1499.5,285.0 1507.5,289.7 1515.5,299.4 1523.5,307.8 1531.5,318.4 1539.5,333.6 1547.5,351.5 1555.5,372.1 1563.5,393.9 1571.5,411.4 1579.5,428.3 1587.5,443.7 1595.5,454.4 1603.5,462.2 1611.5,469.0 1619.5,475.2 1627.5,482.5 1635.5,484.9 1643.5,487.7 1651.5,492.9 1659.5,495.7 1667.5,499.6 1675.5,498.9 1683.5,503.1 1691.5,509.2 1699.5,512.0 1707.5,517.2 1715.5,521.7 1723.5,516.7 1731.5,517.1 1739.5,511.5" fill="none" stroke="#bab682" stroke-width="1" shape-rendering="crispEdges"/>
<polyline points="1.5,39.5 3.5,41.0 11.5,50.5 19.5,61.0 27.5,72.5 35.5,84.0 43.5,92.5 51.5,103.6 59.5,114.8 67.5,122.3 75.5,134.2 83.5,144.5 91.5,155.0 99.5,164.5 107.5,171.7 115.5,175.9 123.5,180.9 131.5,185.4 139.5,188.2 147.5,191.8 155.5,201.3 163.5,211.2 171.5,218.5 179.5,227.2 187.5,235.2 195.5,242.0 203.5,249.1 211.5,256.8 219.5,262.5 227.5,268.3 235.5,272.9 243.5,275.4 251.5,277.0 259.5,277.6 267.5,276.5 275.5,271.8 283.5,268.9 291.5,265.6 299.5,258.2 307.5,250.8 315.5,242.8 323.5,233.6 331.5,224.5 339.5,219.2 347.5,215.7 355.5,211.9 363.5,210.7 371.5,210.8 379.5,209.7 387.5,210.8 395.5,209.9 403.5,208.4 411.5,205.4 419.5,208.0 427.5,209.3 435.5,214.0 443.5,215.9 451.5,215.4 459.5,215.1 467.5,216.7 475.5,221.2 483.5,222.6 491.5,222.4 499.5,224.1 507.5,226.2 515.5,228.5 523.5,230.4 531.5,231.7 539.5,227.3 547.5,223.1 555.5,216.2 563.5,212.7 571.5,213.5 579.5,212.7 587.5,209.4 595.5,205.0 603.5,202.2 611.5,203.2 619.5,203.8 627.5,203.1 635.5,202.9 643.5,202.1 651.5,202.2 659.5,206.9 667.5,213.7 675.5,221.9 683.5,229.7 691.5,234.3 699.5,238.0 707.5,241.6 715.5,245.5 723.5,248.6 731.5,249.3 739.5,249.7 747.5,247.6 755.5,246.2 763.5,246.7 771.5,248.9 779.5,250.4 787.5,251.0 795.5,250.3 803.5,249.5 811.5,250.3 819.5,253.0 827.5,255.4 835.5,257.3 843.5,259.7 851.5,263.9 859.5,268.1 867.5,274.5 875.5,280.1 883.5,284.4 891.5,287.8 899.5,291.8 907.5,296.0 915.5,302.2 923.5,314.9 931.5,325.6 939.5,336.9 947.5,348.4 955.5,359.1 963.5,370.8 971.5,379.8 979.5,389.1 987.5,400.0 995.5,410.2 1003.5,421.1 1011.5,431.5 1019.5,441.3 1027.5,449.7 1035.5,455.8 1043.5,454.6 1051.5,453.4 1059.5,448.7 1067.5,445.0 1075.5,442.7 1083.5,439.0 1091.5,435.5 1099.5,429.9 1107.5,420.2 1115.5,410.3 1123.5,399.9 1131.5,391.9 1139.5,385.8 1147.5,380.5 1155.5,374.5 1163.5,369.8 1171.5,365.1 1179.5,363.7 1187.5,362.2 1195.5,361.0 1203.5,360.8 1211.5,360.3 1219.5,364.3 1227.5,370.6 1235.5,378.8 1243.5,385.7 1251.5,391.1 1259.5,391.9 1267.5,390.9 1275.5,390.0 1283.5,390.3 1291.5,392.7 1299.5,393.3 1307.5,388.8 1315.5,385.2 1323.5,383.4 1331.5,382.5 1339.5,381.4 1347.5,381.1 1355.5,376.3 1363.5,372.3 1371.5,365.9 1379.5,362.0 1387.5,360.9 1395.5,358.4 1403.5,353.8 1411.5,347.0 1419.5,338.7 1427.5,334.4 1435.5,329.7 1443.5,323.7 1451.5,316.3 1459.5,308.3 1467.5,300.3 1475.5,296.5 1483.5,292.3 1491.5,289.2 1499.5,287.6 1507.5,286.5 1515.5,288.7 1523.5,293.3 1531.5,301.1 1539.5,312.9 1547.5,325.0 1555.5,338.3 1563.5,350.2 1571.5,363.3 1579.5,375.6 1587.5,387.9 1595.5,400.1 1603.5,412.3 1611.5,427.0 1619.5,439.9 1627.5,449.4 1635.5,459.1 1643.5,468.9 1651.5,475.2 1659.5,480.8 1667.5,485.5 1675.5,490.3 1683.5,494.6 1691.5,497.7 1699.5,502.8 1707.5,506.2 1715.5,505.8 1723.5,507.6 1731.5,506.9 1739.5,505.9" fill="none" stroke="#ff0000" stroke-width="1" shape-rendering="crispEdges"/>
<text x="13" y="44" fill="#bcb684" stroke="#ffffff" stroke-width="0.12" font-size="11" textLength="174" lengthAdjust="spacingAndGlyphs" class="m">MVA(XAU/USD.Open,7): 1,068.42</text>
<text x="13" y="55" fill="#ff0000" stroke="#ffffff" stroke-width="0.12" font-size="11" textLength="186" lengthAdjust="spacingAndGlyphs" class="m">MVA(XAU/USD.Close,15): 1,070.67</text>
<rect x="1840" y="39" width="15" height="1" fill="#474747"/>
<rect x="1850" y="45" width="5" height="1" fill="#474747"/>
<rect x="1850" y="50" width="5" height="1" fill="#474747"/>
<rect x="1850" y="56" width="5" height="1" fill="#474747"/>
<rect x="1850" y="62" width="5" height="1" fill="#474747"/>
<rect x="1847" y="68" width="8" height="1" fill="#474747"/>
<rect x="1850" y="73" width="5" height="1" fill="#474747"/>
<rect x="1850" y="79" width="5" height="1" fill="#474747"/>
<rect x="1850" y="85" width="5" height="1" fill="#474747"/>
<rect x="1850" y="90" width="5" height="1" fill="#474747"/>
<rect x="1840" y="96" width="15" height="1" fill="#474747"/>
<rect x="1850" y="102" width="5" height="1" fill="#474747"/>
<rect x="1850" y="107" width="5" height="1" fill="#474747"/>
<rect x="1850" y="113" width="5" height="1" fill="#474747"/>
<rect x="1850" y="119" width="5" height="1" fill="#474747"/>
<rect x="1847" y="125" width="8" height="1" fill="#474747"/>
<rect x="1850" y="130" width="5" height="1" fill="#474747"/>
<rect x="1850" y="136" width="5" height="1" fill="#474747"/>
<rect x="1850" y="142" width="5" height="1" fill="#474747"/>
<rect x="1850" y="147" width="5" height="1" fill="#474747"/>
<rect x="1840" y="153" width="15" height="1" fill="#474747"/>
<rect x="1850" y="159" width="5" height="1" fill="#474747"/>
<rect x="1850" y="165" width="5" height="1" fill="#474747"/>
<rect x="1850" y="170" width="5" height="1" fill="#474747"/>
<rect x="1850" y="176" width="5" height="1" fill="#474747"/>
<rect x="1847" y="182" width="8" height="1" fill="#474747"/>
<rect x="1850" y="188" width="5" height="1" fill="#474747"/>
<rect x="1850" y="194" width="5" height="1" fill="#474747"/>
<rect x="1850" y="199" width="5" height="1" fill="#474747"/>
<rect x="1850" y="205" width="5" height="1" fill="#474747"/>
<rect x="1840" y="211" width="15" height="1" fill="#474747"/>
<rect x="1850" y="217" width="5" height="1" fill="#474747"/>
<rect x="1850" y="222" width="5" height="1" fill="#474747"/>
<rect x="1850" y="228" width="5" height="1" fill="#474747"/>
<rect x="1850" y="234" width="5" height="1" fill="#474747"/>
<rect x="1847" y="240" width="8" height="1" fill="#474747"/>
<rect x="1850" y="245" width="5" height="1" fill="#474747"/>
<rect x="1850" y="251" width="5" height="1" fill="#474747"/>
<rect x="1850" y="257" width="5" height="1" fill="#474747"/>
<rect x="1850" y="262" width="5" height="1" fill="#474747"/>
<rect x="1840" y="268" width="15" height="1" fill="#474747"/>
<rect x="1850" y="274" width="5" height="1" fill="#474747"/>
<rect x="1850" y="279" width="5" height="1" fill="#474747"/>
<rect x="1850" y="285" width="5" height="1" fill="#474747"/>
<rect x="1850" y="291" width="5" height="1" fill="#474747"/>
<rect x="1847" y="297" width="8" height="1" fill="#474747"/>
<rect x="1850" y="302" width="5" height="1" fill="#474747"/>
<rect x="1850" y="308" width="5" height="1" fill="#474747"/>
<rect x="1850" y="314" width="5" height="1" fill="#474747"/>
<rect x="1850" y="319" width="5" height="1" fill="#474747"/>
<rect x="1840" y="325" width="15" height="1" fill="#474747"/>
<rect x="1850" y="331" width="5" height="1" fill="#474747"/>
<rect x="1850" y="336" width="5" height="1" fill="#474747"/>
<rect x="1850" y="342" width="5" height="1" fill="#474747"/>
<rect x="1850" y="348" width="5" height="1" fill="#474747"/>
<rect x="1847" y="354" width="8" height="1" fill="#474747"/>
<rect x="1850" y="359" width="5" height="1" fill="#474747"/>
<rect x="1850" y="365" width="5" height="1" fill="#474747"/>
<rect x="1850" y="371" width="5" height="1" fill="#474747"/>
<rect x="1850" y="376" width="5" height="1" fill="#474747"/>
<rect x="1840" y="382" width="15" height="1" fill="#474747"/>
<rect x="1850" y="388" width="5" height="1" fill="#474747"/>
<rect x="1850" y="393" width="5" height="1" fill="#474747"/>
<rect x="1850" y="399" width="5" height="1" fill="#474747"/>
<rect x="1850" y="405" width="5" height="1" fill="#474747"/>
<rect x="1847" y="411" width="8" height="1" fill="#474747"/>
<rect x="1850" y="416" width="5" height="1" fill="#474747"/>
<rect x="1850" y="422" width="5" height="1" fill="#474747"/>
<rect x="1850" y="428" width="5" height="1" fill="#474747"/>
<rect x="1850" y="433" width="5" height="1" fill="#474747"/>
<rect x="1840" y="439" width="15" height="1" fill="#474747"/>
<rect x="1850" y="445" width="5" height="1" fill="#474747"/>
<rect x="1850" y="450" width="5" height="1" fill="#474747"/>
<rect x="1850" y="456" width="5" height="1" fill="#474747"/>
<rect x="1850" y="462" width="5" height="1" fill="#474747"/>
<rect x="1847" y="468" width="8" height="1" fill="#474747"/>
<rect x="1850" y="473" width="5" height="1" fill="#474747"/>
<rect x="1850" y="479" width="5" height="1" fill="#474747"/>
<rect x="1850" y="485" width="5" height="1" fill="#474747"/>
<rect x="1850" y="490" width="5" height="1" fill="#474747"/>
<rect x="1840" y="496" width="15" height="1" fill="#474747"/>
<rect x="1850" y="502" width="5" height="1" fill="#474747"/>
<rect x="1850" y="507" width="5" height="1" fill="#474747"/>
<rect x="1850" y="513" width="5" height="1" fill="#474747"/>
<rect x="1850" y="519" width="5" height="1" fill="#474747"/>
<rect x="1847" y="525" width="8" height="1" fill="#474747"/>
<rect x="1850" y="530" width="5" height="1" fill="#474747"/>
<rect x="1850" y="536" width="5" height="1" fill="#474747"/>
<rect x="1850" y="542" width="5" height="1" fill="#474747"/>
<rect x="1850" y="547" width="5" height="1" fill="#474747"/>
<rect x="1840" y="553" width="15" height="1" fill="#474747"/>
<rect x="1850" y="559" width="5" height="1" fill="#474747"/>
<rect x="1850" y="564" width="5" height="1" fill="#474747"/>
<rect x="1850" y="570" width="5" height="1" fill="#474747"/>
<rect x="1850" y="576" width="5" height="1" fill="#474747"/>
<rect x="1847" y="582" width="8" height="1" fill="#474747"/>
<rect x="1850" y="587" width="5" height="1" fill="#474747"/>
<clipPath id="rc"><rect x="1855" y="0" width="47" height="742"/></clipPath><g clip-path="url(#rc)">
<text x="1858" y="43" fill="#2e2e7a" stroke="#ffffff" stroke-width="0.12" font-size="11" textLength="48" lengthAdjust="spacingAndGlyphs" class="m">1,275.00</text>
<text x="1858" y="100" fill="#2e2e7a" stroke="#ffffff" stroke-width="0.12" font-size="11" textLength="48" lengthAdjust="spacingAndGlyphs" class="m">1,250.00</text>
<text x="1858" y="157" fill="#2e2e7a" stroke="#ffffff" stroke-width="0.12" font-size="11" textLength="48" lengthAdjust="spacingAndGlyphs" class="m">1,225.00</text>
<text x="1858" y="215" fill="#2e2e7a" stroke="#ffffff" stroke-width="0.12" font-size="11" textLength="48" lengthAdjust="spacingAndGlyphs" class="m">1,200.00</text>
<text x="1858" y="272" fill="#2e2e7a" stroke="#ffffff" stroke-width="0.12" font-size="11" textLength="48" lengthAdjust="spacingAndGlyphs" class="m">1,175.00</text>
<text x="1858" y="329" fill="#2e2e7a" stroke="#ffffff" stroke-width="0.12" font-size="11" textLength="48" lengthAdjust="spacingAndGlyphs" class="m">1,150.00</text>
<text x="1858" y="386" fill="#2e2e7a" stroke="#ffffff" stroke-width="0.12" font-size="11" textLength="48" lengthAdjust="spacingAndGlyphs" class="m">1,125.00</text>
<text x="1858" y="443" fill="#2e2e7a" stroke="#ffffff" stroke-width="0.12" font-size="11" textLength="48" lengthAdjust="spacingAndGlyphs" class="m">1,100.00</text>
<text x="1858" y="500" fill="#2e2e7a" stroke="#ffffff" stroke-width="0.12" font-size="11" textLength="48" lengthAdjust="spacingAndGlyphs" class="m">1,075.00</text>
<text x="1858" y="557" fill="#2e2e7a" stroke="#ffffff" stroke-width="0.12" font-size="11" textLength="48" lengthAdjust="spacingAndGlyphs" class="m">1,050.00</text>
</g>
<rect x="1855" y="361" width="48" height="14" fill="#ff9900"/>
<rect x="1855" y="484" width="48" height="14" fill="#66ccff"/>
<g clip-path="url(#rc)">
<text x="1857" y="372" fill="#000000" stroke="#ff9900" stroke-width="0.12" font-size="11" textLength="48" lengthAdjust="spacingAndGlyphs" class="m">1,131.03</text>
<text x="1857" y="495" fill="#000000" stroke="#66ccff" stroke-width="0.12" font-size="11" textLength="48" lengthAdjust="spacingAndGlyphs" class="m">1,077.35</text>
</g>
<rect x="1" y="600" width="1854" height="1" fill="#474747"/>
<rect x="1" y="588" width="1" height="13" fill="#474747"/>
<rect x="3" y="588" width="1" height="12" fill="#474747"/>
<rect x="12" y="597" width="1" height="3" fill="#474747"/>
<rect x="21" y="594" width="1" height="6" fill="#474747"/>
<rect x="30" y="597" width="1" height="3" fill="#474747"/>
<rect x="39" y="594" width="1" height="6" fill="#474747"/>
<rect x="48" y="597" width="1" height="3" fill="#474747"/>
<rect x="57" y="594" width="1" height="6" fill="#474747"/>
<rect x="66" y="597" width="1" height="3" fill="#474747"/>
<rect x="75" y="588" width="1" height="12" fill="#474747"/>
<rect x="84" y="597" width="1" height="3" fill="#474747"/>
<rect x="93" y="594" width="1" height="6" fill="#474747"/>
<rect x="102" y="597" width="1" height="3" fill="#474747"/>
<rect x="111" y="594" width="1" height="6" fill="#474747"/>
<rect x="120" y="597" width="1" height="3" fill="#474747"/>
<rect x="129" y="594" width="1" height="6" fill="#474747"/>
<rect x="138" y="597" width="1" height="3" fill="#474747"/>
<rect x="147" y="588" width="1" height="12" fill="#474747"/>
<rect x="156" y="597" width="1" height="3" fill="#474747"/>
<rect x="165" y="594" width="1" height="6" fill="#474747"/>
<rect x="174" y="597" width="1" height="3" fill="#474747"/>
<rect x="183" y="594" width="1" height="6" fill="#474747"/>
<rect x="192" y="597" width="1" height="3" fill="#474747"/>
<rect x="201" y="594" width="1" height="6" fill="#474747"/>
<rect x="210" y="597" width="1" height="3" fill="#474747"/>
<rect x="219" y="588" width="1" height="12" fill="#474747"/>
<rect x="228" y="597" width="1" height="3" fill="#474747"/>
<rect x="237" y="594" width="1" height="6" fill="#474747"/>
<rect x="246" y="597" width="1" height="3" fill="#474747"/>
<rect x="255" y="594" width="1" height="6" fill="#474747"/>
<rect x="264" y="597" width="1" height="3" fill="#474747"/>
<rect x="273" y="594" width="1" height="6" fill="#474747"/>
<rect x="282" y="597" width="1" height="3" fill="#474747"/>
<rect x="291" y="588" width="1" height="12" fill="#474747"/>
<rect x="300" y="597" width="1" height="3" fill="#474747"/>
<rect x="309" y="594" width="1" height="6" fill="#474747"/>
<rect x="318" y="597" width="1" height="3" fill="#474747"/>
<rect x="327" y="594" width="1" height="6" fill="#474747"/>
<rect x="336" y="597" width="1" height="3" fill="#474747"/>
<rect x="345" y="594" width="1" height="6" fill="#474747"/>
<rect x="354" y="597" width="1" height="3" fill="#474747"/>
<rect x="363" y="588" width="1" height="12" fill="#474747"/>
<rect x="372" y="597" width="1" height="3" fill="#474747"/>
<rect x="381" y="594" width="1" height="6" fill="#474747"/>
<rect x="390" y="597" width="1" height="3" fill="#474747"/>
<rect x="399" y="594" width="1" height="6" fill="#474747"/>
<rect x="408" y="597" width="1" height="3" fill="#474747"/>
<rect x="417" y="594" width="1" height="6" fill="#474747"/>
<rect x="426" y="597" width="1" height="3" fill="#474747"/>
<rect x="435" y="588" width="1" height="12" fill="#474747"/>
<rect x="444" y="597" width="1" height="3" fill="#474747"/>
<rect x="453" y="594" width="1" height="6" fill="#474747"/>
<rect x="462" y="597" width="1" height="3" fill="#474747"/>
<rect x="471" y="594" width="1" height="6" fill="#474747"/>
<rect x="480" y="597" width="1" height="3" fill="#474747"/>
<rect x="489" y="594" width="1" height="6" fill="#474747"/>
<rect x="498" y="597" width="1" height="3" fill="#474747"/>
<rect x="507" y="588" width="1" height="12" fill="#474747"/>
<rect x="516" y="597" width="1" height="3" fill="#474747"/>
<rect x="525" y="594" width="1" height="6" fill="#474747"/>
<rect x="534" y="597" width="1" height="3" fill="#474747"/>
<rect x="543" y="594" width="1" height="6" fill="#474747"/>
<rect x="552" y="597" width="1" height="3" fill="#474747"/>
<rect x="561" y="594" width="1" height="6" fill="#474747"/>
<rect x="570" y="597" width="1" height="3" fill="#474747"/>
<rect x="579" y="588" width="1" height="12" fill="#474747"/>
<rect x="588" y="597" width="1" height="3" fill="#474747"/>
<rect x="597" y="594" width="1" height="6" fill="#474747"/>
<rect x="606" y="597" width="1" height="3" fill="#474747"/>
<rect x="615" y="594" width="1" height="6" fill="#474747"/>
<rect x="624" y="597" width="1" height="3" fill="#474747"/>
<rect x="633" y="594" width="1" height="6" fill="#474747"/>
<rect x="642" y="597" width="1" height="3" fill="#474747"/>
<rect x="651" y="588" width="1" height="12" fill="#474747"/>
<rect x="660" y="597" width="1" height="3" fill="#474747"/>
<rect x="669" y="594" width="1" height="6" fill="#474747"/>
<rect x="678" y="597" width="1" height="3" fill="#474747"/>
<rect x="687" y="594" width="1" height="6" fill="#474747"/>
<rect x="696" y="597" width="1" height="3" fill="#474747"/>
<rect x="705" y="594" width="1" height="6" fill="#474747"/>
<rect x="714" y="597" width="1" height="3" fill="#474747"/>
<rect x="723" y="588" width="1" height="12" fill="#474747"/>
<rect x="732" y="597" width="1" height="3" fill="#474747"/>
<rect x="741" y="594" width="1" height="6" fill="#474747"/>
<rect x="750" y="597" width="1" height="3" fill="#474747"/>
<rect x="759" y="594" width="1" height="6" fill="#474747"/>
<rect x="768" y="597" width="1" height="3" fill="#474747"/>
<rect x="777" y="594" width="1" height="6" fill="#474747"/>
<rect x="786" y="597" width="1" height="3" fill="#474747"/>
<rect x="795" y="588" width="1" height="12" fill="#474747"/>
<rect x="804" y="597" width="1" height="3" fill="#474747"/>
<rect x="813" y="594" width="1" height="6" fill="#474747"/>
<rect x="822" y="597" width="1" height="3" fill="#474747"/>
<rect x="831" y="594" width="1" height="6" fill="#474747"/>
<rect x="840" y="597" width="1" height="3" fill="#474747"/>
<rect x="849" y="594" width="1" height="6" fill="#474747"/>
<rect x="858" y="597" width="1" height="3" fill="#474747"/>
<rect x="867" y="588" width="1" height="12" fill="#474747"/>
<rect x="876" y="597" width="1" height="3" fill="#474747"/>
<rect x="885" y="594" width="1" height="6" fill="#474747"/>
<rect x="894" y="597" width="1" height="3" fill="#474747"/>
<rect x="903" y="594" width="1" height="6" fill="#474747"/>
<rect x="912" y="597" width="1" height="3" fill="#474747"/>
<rect x="921" y="594" width="1" height="6" fill="#474747"/>
<rect x="930" y="597" width="1" height="3" fill="#474747"/>
<rect x="939" y="588" width="1" height="12" fill="#474747"/>
<rect x="948" y="597" width="1" height="3" fill="#474747"/>
<rect x="957" y="594" width="1" height="6" fill="#474747"/>
<rect x="966" y="597" width="1" height="3" fill="#474747"/>
<rect x="975" y="594" width="1" height="6" fill="#474747"/>
<rect x="984" y="597" width="1" height="3" fill="#474747"/>
<rect x="993" y="594" width="1" height="6" fill="#474747"/>
<rect x="1002" y="597" width="1" height="3" fill="#474747"/>
<rect x="1011" y="588" width="1" height="12" fill="#474747"/>
<rect x="1020" y="597" width="1" height="3" fill="#474747"/>
<rect x="1029" y="594" width="1" height="6" fill="#474747"/>
<rect x="1038" y="597" width="1" height="3" fill="#474747"/>
<rect x="1047" y="594" width="1" height="6" fill="#474747"/>
<rect x="1056" y="597" width="1" height="3" fill="#474747"/>
<rect x="1065" y="594" width="1" height="6" fill="#474747"/>
<rect x="1074" y="597" width="1" height="3" fill="#474747"/>
<rect x="1083" y="588" width="1" height="12" fill="#474747"/>
<rect x="1092" y="597" width="1" height="3" fill="#474747"/>
<rect x="1101" y="594" width="1" height="6" fill="#474747"/>
<rect x="1110" y="597" width="1" height="3" fill="#474747"/>
<rect x="1119" y="594" width="1" height="6" fill="#474747"/>
<rect x="1128" y="597" width="1" height="3" fill="#474747"/>
<rect x="1137" y="594" width="1" height="6" fill="#474747"/>
<rect x="1146" y="597" width="1" height="3" fill="#474747"/>
<rect x="1155" y="588" width="1" height="12" fill="#474747"/>
<rect x="1164" y="597" width="1" height="3" fill="#474747"/>
<rect x="1173" y="594" width="1" height="6" fill="#474747"/>
<rect x="1182" y="597" width="1" height="3" fill="#474747"/>
<rect x="1191" y="594" width="1" height="6" fill="#474747"/>
<rect x="1200" y="597" width="1" height="3" fill="#474747"/>
<rect x="1209" y="594" width="1" height="6" fill="#474747"/>
<rect x="1218" y="597" width="1" height="3" fill="#474747"/>
<rect x="1227" y="588" width="1" height="12" fill="#474747"/>
<rect x="1236" y="597" width="1" height="3" fill="#474747"/>
<rect x="1245" y="594" width="1" height="6" fill="#474747"/>
<rect x="1254" y="597" width="1" height="3" fill="#474747"/>
<rect x="1263" y="594" width="1" height="6" fill="#474747"/>
<rect x="1272" y="597" width="1" height="3" fill="#474747"/>
<rect x="1281" y="594" width="1" height="6" fill="#474747"/>
<rect x="1290" y="597" width="1" height="3" fill="#474747"/>
<rect x="1299" y="588" width="1" height="12" fill="#474747"/>
<rect x="1308" y="597" width="1" height="3" fill="#474747"/>
<rect x="1317" y="594" width="1" height="6" fill="#474747"/>
<rect x="1326" y="597" width="1" height="3" fill="#474747"/>
<rect x="1335" y="594" width="1" height="6" fill="#474747"/>
<rect x="1344" y="597" width="1" height="3" fill="#474747"/>
<rect x="1353" y="594" width="1" height="6" fill="#474747"/>
<rect x="1362" y="597" width="1" height="3" fill="#474747"/>
<rect x="1371" y="588" width="1" height="12" fill="#474747"/>
<rect x="1380" y="597" width="1" height="3" fill="#474747"/>
<rect x="1389" y="594" width="1" height="6" fill="#474747"/>
<rect x="1398" y="597" width="1" height="3" fill="#474747"/>
<rect x="1407" y="594" width="1" height="6" fill="#474747"/>
<rect x="1416" y="597" width="1" height="3" fill="#474747"/>
<rect x="1425" y="594" width="1" height="6" fill="#474747"/>
<rect x="1434" y="597" width="1" height="3" fill="#474747"/>
<rect x="1443" y="588" width="1" height="12" fill="#474747"/>
<rect x="1452" y="597" width="1" height="3" fill="#474747"/>
<rect x="1461" y="594" width="1" height="6" fill="#474747"/>
<rect x="1470" y="597" width="1" height="3" fill="#474747"/>
<rect x="1479" y="594" width="1" height="6" fill="#474747"/>
<rect x="1488" y="597" width="1" height="3" fill="#474747"/>
<rect x="1497" y="594" width="1" height="6" fill="#474747"/>
<rect x="1506" y="597" width="1" height="3" fill="#474747"/>
<rect x="1515" y="588" width="1" height="12" fill="#474747"/>
<rect x="1524" y="597" width="1" height="3" fill="#474747"/>
<rect x="1533" y="594" width="1" height="6" fill="#474747"/>
<rect x="1542" y="597" width="1" height="3" fill="#474747"/>
<rect x="1551" y="594" width="1" height="6" fill="#474747"/>
<rect x="1560" y="597" width="1" height="3" fill="#474747"/>
<rect x="1569" y="594" width="1" height="6" fill="#474747"/>
<rect x="1578" y="597" width="1" height="3" fill="#474747"/>
<rect x="1587" y="588" width="1" height="12" fill="#474747"/>
<rect x="1596" y="597" width="1" height="3" fill="#474747"/>
<rect x="1605" y="594" width="1" height="6" fill="#474747"/>
<rect x="1614" y="597" width="1" height="3" fill="#474747"/>
<rect x="1623" y="594" width="1" height="6" fill="#474747"/>
<rect x="1632" y="597" width="1" height="3" fill="#474747"/>
<rect x="1641" y="594" width="1" height="6" fill="#474747"/>
<rect x="1650" y="597" width="1" height="3" fill="#474747"/>
<rect x="1659" y="588" width="1" height="12" fill="#474747"/>
<rect x="1668" y="597" width="1" height="3" fill="#474747"/>
<rect x="1677" y="594" width="1" height="6" fill="#474747"/>
<rect x="1686" y="597" width="1" height="3" fill="#474747"/>
<rect x="1695" y="594" width="1" height="6" fill="#474747"/>
<rect x="1704" y="597" width="1" height="3" fill="#474747"/>
<rect x="1713" y="594" width="1" height="6" fill="#474747"/>
<rect x="1722" y="597" width="1" height="3" fill="#474747"/>
<rect x="1731" y="588" width="1" height="12" fill="#474747"/>
<rect x="1740" y="597" width="1" height="3" fill="#474747"/>
<rect x="1749" y="594" width="1" height="6" fill="#474747"/>
<rect x="1758" y="597" width="1" height="3" fill="#474747"/>
<rect x="1767" y="594" width="1" height="6" fill="#474747"/>
<rect x="1776" y="597" width="1" height="3" fill="#474747"/>
<rect x="1785" y="594" width="1" height="6" fill="#474747"/>
<rect x="1794" y="597" width="1" height="3" fill="#474747"/>
<rect x="1803" y="588" width="1" height="12" fill="#474747"/>
<rect x="1812" y="597" width="1" height="3" fill="#474747"/>
<rect x="1821" y="594" width="1" height="6" fill="#474747"/>
<rect x="1830" y="597" width="1" height="3" fill="#474747"/>
<rect x="1839" y="594" width="1" height="6" fill="#474747"/>
<rect x="1848" y="597" width="1" height="3" fill="#474747"/>
<text x="1" y="615" fill="#2e2e7a" stroke="#ffffff" stroke-width="0.12" font-size="11" textLength="60" lengthAdjust="spacingAndGlyphs" class="m">2015/02/09</text>
<text x="131.5" y="615" fill="#2e2e7a" stroke="#ffffff" stroke-width="0.12" font-size="11" textLength="30" lengthAdjust="spacingAndGlyphs" class="m">03/05</text>
<text x="203.5" y="615" fill="#2e2e7a" stroke="#ffffff" stroke-width="0.12" font-size="11" textLength="30" lengthAdjust="spacingAndGlyphs" class="m">03/18</text>
<text x="275.5" y="615" fill="#2e2e7a" stroke="#ffffff" stroke-width="0.12" font-size="11" textLength="30" lengthAdjust="spacingAndGlyphs" class="m">03/31</text>
<text x="347.5" y="615" fill="#2e2e7a" stroke="#ffffff" stroke-width="0.12" font-size="11" textLength="30" lengthAdjust="spacingAndGlyphs" class="m">04/13</text>
<text x="419.5" y="615" fill="#2e2e7a" stroke="#ffffff" stroke-width="0.12" font-size="11" textLength="30" lengthAdjust="spacingAndGlyphs" class="m">04/24</text>
<text x="491.5" y="615" fill="#2e2e7a" stroke="#ffffff" stroke-width="0.12" font-size="11" textLength="30" lengthAdjust="spacingAndGlyphs" class="m">05/07</text>
<text x="563.5" y="615" fill="#2e2e7a" stroke="#ffffff" stroke-width="0.12" font-size="11" textLength="30" lengthAdjust="spacingAndGlyphs" class="m">05/20</text>
<text x="635.5" y="615" fill="#2e2e7a" stroke="#ffffff" stroke-width="0.12" font-size="11" textLength="30" lengthAdjust="spacingAndGlyphs" class="m">06/02</text>
<text x="707.5" y="615" fill="#2e2e7a" stroke="#ffffff" stroke-width="0.12" font-size="11" textLength="30" lengthAdjust="spacingAndGlyphs" class="m">06/15</text>
<text x="779.5" y="615" fill="#2e2e7a" stroke="#ffffff" stroke-width="0.12" font-size="11" textLength="30" lengthAdjust="spacingAndGlyphs" class="m">06/26</text>
<text x="851.5" y="615" fill="#2e2e7a" stroke="#ffffff" stroke-width="0.12" font-size="11" textLength="30" lengthAdjust="spacingAndGlyphs" class="m">07/09</text>
<text x="923.5" y="615" fill="#2e2e7a" stroke="#ffffff" stroke-width="0.12" font-size="11" textLength="30" lengthAdjust="spacingAndGlyphs" class="m">07/22</text>
<text x="995.5" y="615" fill="#2e2e7a" stroke="#ffffff" stroke-width="0.12" font-size="11" textLength="30" lengthAdjust="spacingAndGlyphs" class="m">08/04</text>
<text x="1067.5" y="615" fill="#2e2e7a" stroke="#ffffff" stroke-width="0.12" font-size="11" textLength="30" lengthAdjust="spacingAndGlyphs" class="m">08/17</text>
<text x="1139.5" y="615" fill="#2e2e7a" stroke="#ffffff" stroke-width="0.12" font-size="11" textLength="30" lengthAdjust="spacingAndGlyphs" class="m">08/28</text>
<text x="1211.5" y="615" fill="#2e2e7a" stroke="#ffffff" stroke-width="0.12" font-size="11" textLength="30" lengthAdjust="spacingAndGlyphs" class="m">09/10</text>
<text x="1283.5" y="615" fill="#2e2e7a" stroke="#ffffff" stroke-width="0.12" font-size="11" textLength="30" lengthAdjust="spacingAndGlyphs" class="m">09/23</text>
<text x="1355.5" y="615" fill="#2e2e7a" stroke="#ffffff" stroke-width="0.12" font-size="11" textLength="30" lengthAdjust="spacingAndGlyphs" class="m">10/06</text>
<text x="1427.5" y="615" fill="#2e2e7a" stroke="#ffffff" stroke-width="0.12" font-size="11" textLength="30" lengthAdjust="spacingAndGlyphs" class="m">10/19</text>
<text x="1499.5" y="615" fill="#2e2e7a" stroke="#ffffff" stroke-width="0.12" font-size="11" textLength="30" lengthAdjust="spacingAndGlyphs" class="m">10/30</text>
<text x="1571.5" y="615" fill="#2e2e7a" stroke="#ffffff" stroke-width="0.12" font-size="11" textLength="30" lengthAdjust="spacingAndGlyphs" class="m">11/12</text>
<text x="1643.5" y="615" fill="#2e2e7a" stroke="#ffffff" stroke-width="0.12" font-size="11" textLength="30" lengthAdjust="spacingAndGlyphs" class="m">11/25</text>
<text x="1715.5" y="615" fill="#2e2e7a" stroke="#ffffff" stroke-width="0.12" font-size="11" textLength="30" lengthAdjust="spacingAndGlyphs" class="m">12/08</text>
<text x="1787.5" y="615" fill="#2e2e7a" stroke="#ffffff" stroke-width="0.12" font-size="11" textLength="30" lengthAdjust="spacingAndGlyphs" class="m">12/17</text>
<rect x="428" y="605" width="64" height="14" fill="#ff9900"/>
<text x="430" y="616" fill="#000000" stroke="#ff9900" stroke-width="0.12" font-size="11" textLength="60" lengthAdjust="spacingAndGlyphs" class="m">2015/04/29</text>
<rect x="1" y="623" width="1903" height="4" fill="#c5d0de"/>
<rect x="1" y="629" width="1839" height="1" fill="#e2e2e6"/>
<rect x="1" y="630" width="1839" height="1" fill="#c6d1df"/>
<rect x="1839" y="630" width="1" height="112" fill="#c6d1df"/>
<rect x="1" y="631" width="1" height="111" fill="#e0e0e4"/>
<rect x="3" y="632" width="1" height="110" fill="#e0e0e4"/>
<rect x="75" y="632" width="1" height="110" fill="#e0e0e4"/>
<rect x="147" y="632" width="1" height="110" fill="#e0e0e4"/>
<rect x="219" y="632" width="1" height="110" fill="#e0e0e4"/>
<rect x="291" y="632" width="1" height="110" fill="#e0e0e4"/>
<rect x="363" y="632" width="1" height="110" fill="#e0e0e4"/>
<rect x="435" y="632" width="1" height="110" fill="#e0e0e4"/>
<rect x="507" y="632" width="1" height="110" fill="#e0e0e4"/>
<rect x="579" y="632" width="1" height="110" fill="#e0e0e4"/>
<rect x="651" y="632" width="1" height="110" fill="#e0e0e4"/>
<rect x="723" y="632" width="1" height="110" fill="#e0e0e4"/>
<rect x="795" y="632" width="1" height="110" fill="#e0e0e4"/>
<rect x="867" y="632" width="1" height="110" fill="#e0e0e4"/>
<rect x="939" y="632" width="1" height="110" fill="#e0e0e4"/>
<rect x="1011" y="632" width="1" height="110" fill="#e0e0e4"/>
<rect x="1083" y="632" width="1" height="110" fill="#e0e0e4"/>
<rect x="1155" y="632" width="1" height="110" fill="#e0e0e4"/>
<rect x="1227" y="632" width="1" height="110" fill="#e0e0e4"/>
<rect x="1299" y="632" width="1" height="110" fill="#e0e0e4"/>
<rect x="1371" y="632" width="1" height="110" fill="#e0e0e4"/>
<rect x="1443" y="632" width="1" height="110" fill="#e0e0e4"/>
<rect x="1515" y="632" width="1" height="110" fill="#e0e0e4"/>
<rect x="1587" y="632" width="1" height="110" fill="#e0e0e4"/>
<rect x="1659" y="632" width="1" height="110" fill="#e0e0e4"/>
<rect x="1731" y="632" width="1" height="110" fill="#e0e0e4"/>
<rect x="1803" y="632" width="1" height="110" fill="#e0e0e4"/>
<rect x="1" y="636" width="1854" height="1" fill="#000000"/>
<rect x="1" y="688" width="1854" height="1" fill="#000000"/>
<rect x="1" y="739" width="1854" height="1" fill="#000000"/>
<rect x="1" y="667" width="1838" height="1" fill="#ff5a5a"/>
<rect x="1" y="708" width="1838" height="1" fill="#ff5a5a"/>
<rect x="1854" y="630" width="1" height="112" fill="#474747"/>
<rect x="1850" y="631" width="5" height="1" fill="#474747"/>
<rect x="1850" y="734" width="5" height="1" fill="#474747"/>
<rect x="1850" y="729" width="5" height="1" fill="#474747"/>
<rect x="1850" y="724" width="5" height="1" fill="#474747"/>
<rect x="1850" y="719" width="5" height="1" fill="#474747"/>
<rect x="1847" y="714" width="8" height="1" fill="#474747"/>
<rect x="1850" y="708" width="5" height="1" fill="#474747"/>
<rect x="1850" y="703" width="5" height="1" fill="#474747"/>
<rect x="1850" y="698" width="5" height="1" fill="#474747"/>
<rect x="1850" y="693" width="5" height="1" fill="#474747"/>
<rect x="1850" y="682" width="5" height="1" fill="#474747"/>
<rect x="1850" y="677" width="5" height="1" fill="#474747"/>
<rect x="1850" y="672" width="5" height="1" fill="#474747"/>
<rect x="1850" y="667" width="5" height="1" fill="#474747"/>
<rect x="1847" y="662" width="8" height="1" fill="#474747"/>
<rect x="1850" y="656" width="5" height="1" fill="#474747"/>
<rect x="1850" y="651" width="5" height="1" fill="#474747"/>
<rect x="1850" y="646" width="5" height="1" fill="#474747"/>
<rect x="1850" y="641" width="5" height="1" fill="#474747"/>
<rect x="1857" y="632" width="18" height="11" fill="#a0a0a0"/>
<text x="1857" y="641" fill="#000000" stroke="#a0a0a0" stroke-width="0.12" font-size="11" textLength="18" lengthAdjust="spacingAndGlyphs" class="m">100</text>
<rect x="1857" y="663" width="12" height="11" fill="#ff5050"/>
<text x="1857" y="672" fill="#000000" stroke="#ff5050" stroke-width="0.12" font-size="11" textLength="12" lengthAdjust="spacingAndGlyphs" class="m">70</text>
<rect x="1857" y="684" width="12" height="11" fill="#a0a0a0"/>
<text x="1857" y="693" fill="#000000" stroke="#a0a0a0" stroke-width="0.12" font-size="11" textLength="12" lengthAdjust="spacingAndGlyphs" class="m">50</text>
<rect x="1857" y="704" width="12" height="11" fill="#ff5050"/>
<text x="1857" y="713" fill="#000000" stroke="#ff5050" stroke-width="0.12" font-size="11" textLength="12" lengthAdjust="spacingAndGlyphs" class="m">30</text>
<text x="1857" y="742" fill="#000000" stroke="#ffffff" stroke-width="0.12" font-size="11" textLength="6" lengthAdjust="spacingAndGlyphs" class="m">0</text>
<polyline points="1.5,692 3.5,691.6 11.5,693.3 19.5,697.3 27.5,695.9 35.5,693.0 43.5,692.1 51.5,698.6 59.5,697.4 67.5,699.1 75.5,700.3 83.5,700.4 91.5,701.0 99.5,698.3 107.5,696.0 115.5,694.0 123.5,696.8 131.5,698.0 139.5,699.5 147.5,700.1 155.5,710.1 163.5,710.3 171.5,711.6 179.5,713.3 187.5,713.7 195.5,710.5 203.5,711.4 211.5,713.0 219.5,699.7 227.5,697.5 235.5,690.9 243.5,687.3 251.5,685.5 259.5,684.4 267.5,679.7 275.5,683.6 283.5,690.5 291.5,691.9 299.5,681.6 307.5,682.4 315.5,679.0 323.5,677.0 331.5,680.8 339.5,684.6 347.5,688.8 355.5,682.5 363.5,687.7 371.5,690.2 379.5,685.1 387.5,687.6 395.5,684.6 403.5,688.9 411.5,685.4 419.5,693.0 427.5,689.3 435.5,695.6 443.5,685.4 451.5,681.7 459.5,685.2 467.5,692.9 475.5,695.0 483.5,690.7 491.5,688.6 499.5,689.1 507.5,692.4 515.5,690.1 523.5,692.4 531.5,687.4 539.5,679.1 547.5,677.3 555.5,676.3 563.5,675.9 571.5,685.2 579.5,684.1 587.5,686.0 595.5,685.7 603.5,685.6 611.5,695.2 619.5,694.6 627.5,694.3 635.5,693.0 643.5,694.0 651.5,691.0 659.5,695.6 667.5,699.6 675.5,702.2 683.5,699.6 691.5,697.6 699.5,691.0 707.5,693.5 715.5,693.9 723.5,690.0 731.5,692.9 739.5,690.3 747.5,680.0 755.5,681.7 763.5,690.5 771.5,694.5 779.5,696.2 787.5,697.5 795.5,695.6 803.5,692.1 811.5,696.8 819.5,698.8 827.5,699.9 835.5,697.3 843.5,696.1 851.5,704.6 859.5,701.5 867.5,700.3 875.5,697.0 883.5,700.3 891.5,701.2 899.5,705.1 907.5,706.9 915.5,711.8 923.5,721.5 931.5,717.6 939.5,719.2 947.5,719.9 955.5,712.9 963.5,714.4 971.5,712.8 979.5,711.3 987.5,714.1 995.5,707.7 1003.5,710.9 1011.5,709.8 1019.5,710.8 1027.5,706.4 1035.5,703.0 1043.5,694.9 1051.5,691.9 1059.5,683.0 1067.5,688.6 1075.5,688.8 1083.5,686.7 1091.5,686.7 1099.5,677.9 1107.5,670.7 1115.5,667.9 1123.5,672.0 1131.5,681.0 1139.5,688.6 1147.5,688.7 1155.5,684.4 1163.5,683.7 1171.5,681.4 1179.5,685.1 1187.5,689.7 1195.5,691.3 1203.5,692.6 1211.5,691.2 1219.5,698.3 1227.5,696.1 1235.5,697.7 1243.5,696.6 1251.5,698.7 1259.5,688.7 1267.5,682.4 1275.5,678.7 1283.5,682.4 1291.5,687.5 1299.5,684.5 1307.5,674.4 1315.5,679.2 1323.5,686.3 1331.5,688.3 1339.5,693.8 1347.5,694.3 1355.5,683.0 1363.5,684.4 1371.5,680.0 1379.5,681.0 1387.5,684.4 1395.5,677.7 1403.5,675.1 1411.5,673.5 1419.5,669.0 1427.5,669.9 1435.5,673.6 1443.5,677.1 1451.5,675.1 1459.5,680.2 1467.5,680.9 1475.5,681.9 1483.5,682.5 1491.5,680.5 1499.5,687.4 1507.5,692.6 1515.5,694.6 1523.5,698.4 1531.5,704.4 1539.5,707.7 1547.5,708.9 1555.5,712.9 1563.5,710.4 1571.5,711.2 1579.5,712.2 1587.5,712.6 1595.5,712.9 1603.5,713.3 1611.5,716.9 1619.5,716.4 1627.5,706.0 1635.5,707.8 1643.5,711.0 1651.5,705.1 1659.5,707.1 1667.5,706.1 1675.5,711.5 1683.5,705.8 1691.5,702.2 1699.5,708.2 1707.5,701.8 1715.5,688.5 1723.5,694.8 1731.5,692.9 1739.5,691.6" fill="none" stroke="#e05a14" stroke-width="1" shape-rendering="crispEdges"/>
<text x="13" y="640" fill="#d8500c" stroke="#ffffff" stroke-width="0.12" font-size="11" textLength="174" lengthAdjust="spacingAndGlyphs" class="m">RSI(XAU/USD.Close, 14): 46.51</text>
</svg></div></body></html>
